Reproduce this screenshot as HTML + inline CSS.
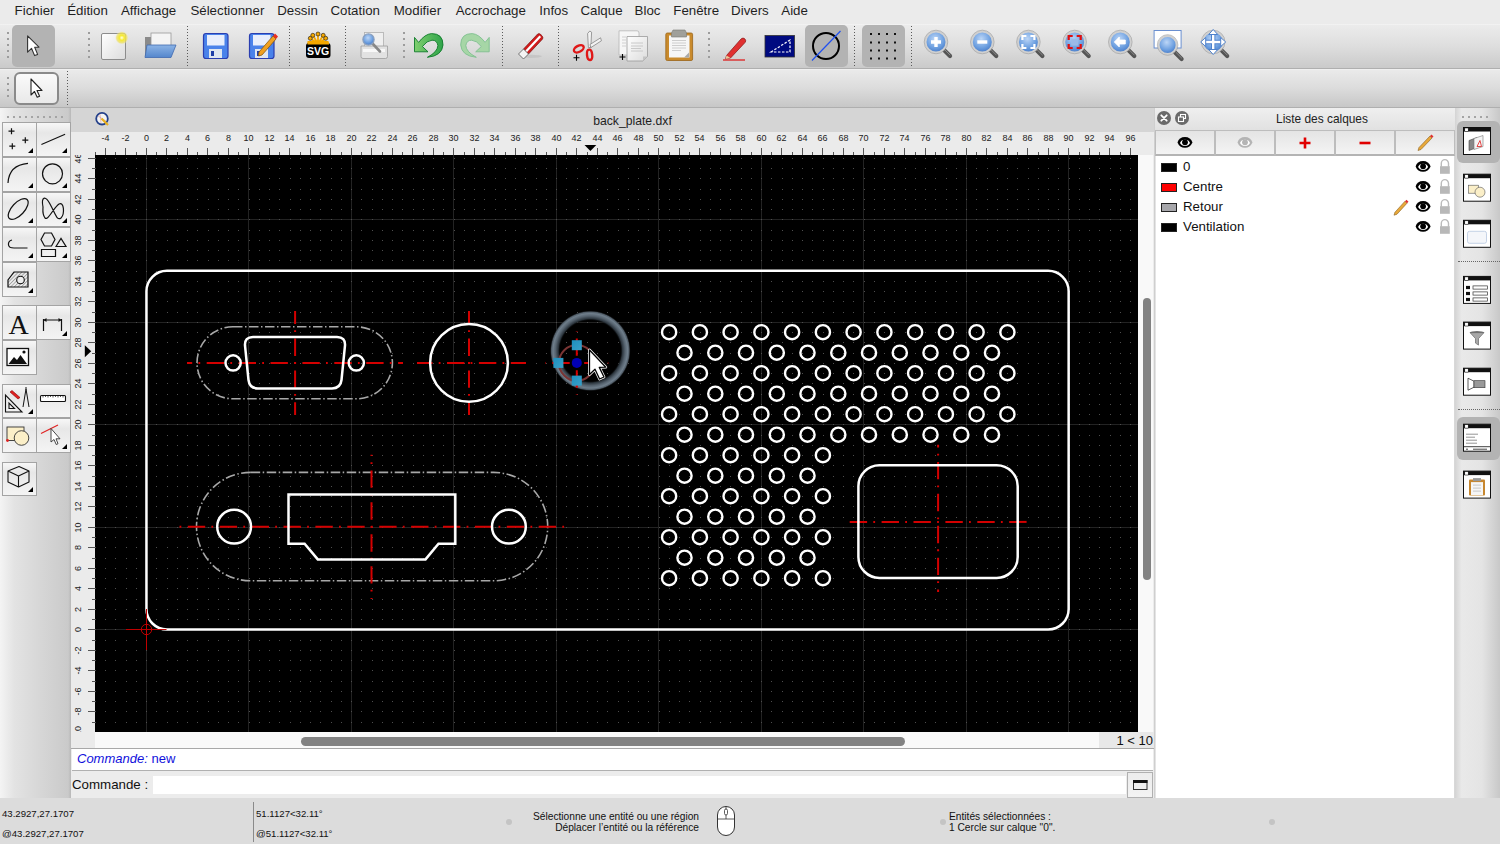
<!DOCTYPE html>
<html><head><meta charset="utf-8"><title>LibreCAD</title>
<style>
*{box-sizing:border-box}
html,body{margin:0;padding:0}
body{width:1500px;height:844px;overflow:hidden;position:relative;background:#ececec;font-family:"Liberation Sans",sans-serif;color:#1e1e1e}
.a{position:absolute}
#menubar{left:0;top:0;width:1500px;height:24px;background:#ebebeb}
#menubar span{position:absolute;top:3px;font-size:13.3px;line-height:16px;color:#1f1f1f;white-space:nowrap}
#tb1{left:0;top:24px;width:1500px;height:45px;background:linear-gradient(#f5f5f5 0,#ebebeb 1.5px,#dedede 50%,#cacaca);border-bottom:1px solid #afafaf}
#tb2{left:0;top:69px;width:1500px;height:39px;background:linear-gradient(#f3f3f3 0,#eaeaea 1.5px,#dcdcdc 50%,#c7c7c7);border-bottom:1px solid #afafaf}
.sel{position:absolute;background:#b3b3b3;border-radius:5px}
.vdots{position:absolute;width:1px;background:linear-gradient(#5a5a5a 0 1px,transparent 1px 3px) 0 0/1px 3px repeat-y}
.hdl{position:absolute;width:2px;background:linear-gradient(#9c9c9c 0 2px,transparent 2px 6px) 0 0/2px 6px repeat-y}
.ico{position:absolute}
#toolbox{left:0;top:108px;width:71px;height:690px;background:linear-gradient(90deg,#f4f4f4,#e3e3e3 20%,#d7d7d7 55%,#cacaca 96%,#b8b8b8)}
.tbtn{position:absolute;width:34px;height:34px;border:1px solid #a4a4a4;background:linear-gradient(#f7f7f7,#e7e7e7 30%,#ededed 60%,#f4f4f4)}
.tri{position:absolute;right:3px;bottom:3px;width:0;height:0;border-left:5px solid transparent;border-bottom:5px solid #000}
</style></head><body>
<div id="menubar" class="a">
<span style="left:14.6px">Fichier</span><span style="left:67.2px">Édition</span><span style="left:121px">Affichage</span><span style="left:190.4px">Sélectionner</span><span style="left:277.2px">Dessin</span><span style="left:330.4px">Cotation</span><span style="left:393.8px">Modifier</span><span style="left:455.7px">Accrochage</span><span style="left:539.3px">Infos</span><span style="left:580.4px">Calque</span><span style="left:634.6px">Bloc</span><span style="left:673.3px">Fenêtre</span><span style="left:731.1px">Divers</span><span style="left:781.3px">Aide</span>
</div>
<div id="tb1" class="a"></div>
<div class="sel" style="left:12px;top:25px;width:43px;height:42px"></div>
<div class="sel" style="left:805px;top:25px;width:43px;height:42px"></div>
<div class="sel" style="left:862px;top:25px;width:43px;height:42px"></div>
<div class="hdl" style="left:7px;top:32px;height:26px"></div>
<div class="hdl" style="left:88px;top:32px;height:26px"></div>
<div class="hdl" style="left:403px;top:32px;height:26px"></div>
<div class="hdl" style="left:708px;top:32px;height:26px"></div>
<div class="vdots" style="left:187px;top:26px;height:40px"></div>
<div class="vdots" style="left:289px;top:26px;height:40px"></div>
<div class="vdots" style="left:345px;top:26px;height:40px"></div>
<div class="vdots" style="left:502px;top:26px;height:40px"></div>
<div class="vdots" style="left:558px;top:26px;height:40px"></div>
<div class="vdots" style="left:854px;top:26px;height:40px"></div>
<div class="vdots" style="left:911px;top:26px;height:40px"></div>
<svg class="ico" style="left:0;top:24px" width="1260" height="44" viewBox="0 24 1260 44">
<defs>
<linearGradient id="blueF" x1="0" y1="0" x2="0" y2="1"><stop offset="0" stop-color="#8cb4e6"/><stop offset="1" stop-color="#5486cc"/></linearGradient>
<radialGradient id="lens" cx="0.45" cy="0.35" r="0.7"><stop offset="0" stop-color="#bcd6f7"/><stop offset="0.6" stop-color="#6ea0e0"/><stop offset="1" stop-color="#3f74c4"/></radialGradient>
<linearGradient id="grn" x1="0" y1="0" x2="0" y2="1"><stop offset="0" stop-color="#4cc46a"/><stop offset="1" stop-color="#17892f"/></linearGradient>
<linearGradient id="paper" x1="0" y1="0" x2="1" y2="1"><stop offset="0" stop-color="#ffffff"/><stop offset="1" stop-color="#dcdcdc"/></linearGradient>
</defs>
<!-- select arrow -->
<path d="M27.6,35.8 L27.6,52.2 L31.5,48.3 L34.6,55.6 L37.6,54.4 L34.7,47.3 L39,47.1 Z" fill="#fff" stroke="#333" stroke-width="1.1" stroke-linejoin="round"/>
<!-- new doc -->
<rect x="101.5" y="33.5" width="24" height="26" rx="1.5" fill="url(#paper)" stroke="#8c8c8c" stroke-width="1"/>
<radialGradient id="glow"><stop offset="0" stop-color="#ffffe8"/><stop offset="0.35" stop-color="#f6ea30"/><stop offset="0.75" stop-color="#eee060" stop-opacity="0.7"/><stop offset="1" stop-color="#eee" stop-opacity="0"/></radialGradient><circle cx="121.8" cy="37.8" r="7" fill="url(#glow)"/>
<!-- open folder -->
<path d="M145,37 L153,37 L155,35 L171,35 L171,54 L145,56 Z" fill="#8a8a8a"/>
<rect x="151" y="33" width="20" height="17" fill="#f4f4f4" stroke="#999" stroke-width="0.8"/>
<path d="M147,45 L176,45 L171,57.5 L145,57.5 Z" fill="url(#blueF)" stroke="#3f69b0" stroke-width="0.8"/>
<!-- save -->
<rect x="203.5" y="33.5" width="24.5" height="25" rx="2.5" fill="#4a82ea" stroke="#2a3eb0" stroke-width="1.2"/>
<rect x="207" y="35" width="17.5" height="10.5" fill="#e8eefc"/>
<rect x="209" y="49" width="13" height="9" fill="#dfe6f0"/><rect x="211" y="51" width="3" height="5" fill="#1f3fa8"/>
<!-- save as -->
<rect x="249.5" y="33.5" width="24.5" height="25" rx="2.5" fill="#4a82ea" stroke="#2a3eb0" stroke-width="1.2"/>
<rect x="253" y="35" width="17.5" height="10.5" fill="#e8eefc"/>
<rect x="255" y="49" width="13" height="9" fill="#dfe6f0"/><rect x="257" y="51" width="3" height="5" fill="#1f3fa8"/>
<path d="M259,52 L273,36 L276,39 L262,55 L258.5,56 Z" fill="#f0a020" stroke="#8a5a10" stroke-width="0.8"/><path d="M273,36 L275,33.5 L278,36.5 L276,39 Z" fill="#e83020"/>
<!-- SVG -->
<path d="M318,44 L310.5,38.5 M318,44 L313,35.5 M318,44 L318,34.2 M318,44 L323,35.5 M318,44 L325.5,38.5" stroke="#f5a800" stroke-width="1.8"/>
<g fill="#f5a800" stroke="#111" stroke-width="0.6"><circle cx="310.3" cy="38.3" r="2"/><circle cx="312.8" cy="35.3" r="2"/><circle cx="318" cy="34" r="2"/><circle cx="323.2" cy="35.3" r="2"/><circle cx="325.7" cy="38.3" r="2"/></g>
<rect x="307.5" y="41" width="21" height="3" fill="#f5a800"/>
<rect x="306" y="43" width="24.5" height="15" rx="3" fill="#000"/><rect x="307.5" y="42.3" width="21.5" height="2.2" fill="#f5a800"/>
<text x="318.2" y="55.3" font-size="10.5" font-weight="bold" text-anchor="middle" fill="#fff" font-family="Liberation Sans">SVG</text>
<!-- print preview -->
<rect x="364.5" y="32.5" width="19" height="14" fill="#efefef" stroke="#b0b0b0" stroke-width="0.8"/>
<path d="M361,46 L387.5,46 L387.5,56.5 Q387.5,58.5 385.5,58.5 L363,58.5 Q361,58.5 361,56.5 Z" fill="#e2e2e2" stroke="#9c9c9c" stroke-width="0.8"/>
<rect x="363" y="49" width="22" height="3" fill="#f8f8f8"/>
<line x1="372" y1="43" x2="380" y2="51.5" stroke="#888" stroke-width="2.6" stroke-linecap="round"/>
<circle cx="368.5" cy="39.5" r="5.6" fill="url(#lens)" stroke="#8aa0bf" stroke-width="1.3"/>
<!-- undo -->
<linearGradient id="grnU" x1="0" y1="0" x2="1" y2="0"><stop offset="0" stop-color="#7fcf6e"/><stop offset="1" stop-color="#2fa44a"/></linearGradient>
<path d="M414.5,37.4 L418.6,42.4 Q425,34 431.5,33.6 Q443,33.5 443,45 Q442,56 427.4,57.3 Q437.5,52 437.9,45.6 Q437,40 432,40.2 Q427,40.5 422.4,46.5 L428,51.8 L414.5,51.8 Z" fill="url(#grnU)" stroke="#0f7a2a" stroke-width="0.9" stroke-linejoin="round"/>
<!-- redo (disabled) -->
<path d="M 489.2 37.4 L 485.1 42.4 Q 478.7 34.0 472.2 33.6 Q 460.7 33.5 460.7 45.0 Q 461.7 56.0 476.3 57.3 Q 466.2 52.0 465.8 45.6 Q 466.7 40.0 471.7 40.2 Q 476.7 40.5 481.3 46.5 L 475.7 51.8 L 489.2 51.8 Z" fill="#a6d6a6" stroke="#7fbf90" stroke-width="0.9" stroke-linejoin="round"/>
<!-- eraser -->
<ellipse cx="531" cy="56.3" rx="11" ry="1.6" fill="#bbb" opacity="0.6"/>
<path d="M523.5,49 L537.5,34.2 Q539,33 540.5,34.3 L542.5,36.5 Q543.5,38 542.3,39.3 L528.5,54 Z" fill="#d21a1a" stroke="#7a1010" stroke-width="0.7"/>
<path d="M526,51.5 L540.3,36.3" stroke="#fff" stroke-width="2.2"/>
<path d="M518.5,54 L523.5,49 L528.5,54 L523.5,59 Z" fill="#f4f4f4" stroke="#555" stroke-width="0.8"/>
<!-- scissors -->
<path d="M587.6,33.5 L589.8,31 L591.6,32.2 L590.8,47.5 L588.4,47.5 Z" fill="#f2f2f2" stroke="#777" stroke-width="0.7"/>
<path d="M590,44.5 L600.6,37.8 L601.4,40.8 L590.8,47.6 Z" fill="#f2f2f2" stroke="#777" stroke-width="0.7"/>
<ellipse cx="578.8" cy="48.8" rx="5.3" ry="3" fill="none" stroke="#e01818" stroke-width="2.4" transform="rotate(-28 578.8 48.8)"/>
<ellipse cx="589.6" cy="54.8" rx="2.6" ry="5.2" fill="none" stroke="#e01818" stroke-width="2.4" transform="rotate(-6 589.6 54.8)"/>
<path d="M573.5,57.8 h6 M576.5,54.8 v6" stroke="#000" stroke-width="1.1"/>
<!-- copy -->
<path d="M619,30.8 L637,30.8 Q639,30.8 639,33 L639,55 L619,55 Z" fill="#f6f6f6" stroke="#b5b5b5" stroke-width="0.8"/>
<path d="M622,37 h4 M622,40 h4 M622,43 h4 M622,46 h4" stroke="#ccc" stroke-width="0.9"/>
<path d="M627,36.5 L647.5,36.5 L647.5,56.5 L643,61 L627,61 Z" fill="url(#paper)" stroke="#9a9a9a" stroke-width="0.8"/>
<path d="M643,61 L643,56.5 L647.5,56.5 Z" fill="#c4c4c4"/>
<path d="M631,43 h12 M631,46 h12 M631,48.5 h10 M631,51 h12" stroke="#c4c4c4" stroke-width="0.9"/>
<path d="M619.5,57 h6 M622.5,54 v6" stroke="#000" stroke-width="1.1"/>
<!-- paste -->
<rect x="665.8" y="33" width="26.8" height="27.5" rx="1.5" fill="#c98a2c" stroke="#9a6418" stroke-width="0.8"/>
<rect x="669" y="35.5" width="20.5" height="22" fill="#f6f6f6"/>
<path d="M672,40.5 h14 M672,43 h14 M672,45.5 h14 M672,48 h14 M672,50.5 h9" stroke="#c8c8c8" stroke-width="0.9"/>
<path d="M673,30 h12 l1.5,3 v4 h-15 v-4 z" fill="#a0a09a" stroke="#7a7a74" stroke-width="0.6"/>
<path d="M684,57.5 L689,52.5 L689,57.5 Z" fill="#aaa"/>
<!-- pencil -->
<path d="M726.5,55.5 L741,39 Q743,37 745,39 Q746.5,41 745,42.5 L730.5,58 L725.5,59 Z" fill="#e03030" stroke="#902020" stroke-width="0.8"/>
<path d="M726.5,55.5 L730.5,58 L725.5,59 Z" fill="#e9c89a"/>
<line x1="723" y1="60" x2="745" y2="60" stroke="#e01010" stroke-width="1.2"/>
<!-- ortho blue -->
<rect x="765" y="35.5" width="29.5" height="21.5" fill="#000a80" stroke="#333" stroke-width="0.8"/>
<path d="M771,52 L790,40 L790,52 Z" fill="none" stroke="#fff" stroke-width="1.2" stroke-dasharray="2.5 1.5"/>
<!-- circle slash -->
<circle cx="826" cy="46" r="13" fill="none" stroke="#000" stroke-width="2"/>
<line x1="812" y1="60.5" x2="840.5" y2="31" stroke="#2050f0" stroke-width="1.2"/>
<!-- grid dots -->
<g fill="#111">
<rect x="870" y="33" width="2" height="2"/><rect x="878" y="33" width="2" height="2"/><rect x="886" y="33" width="2" height="2"/><rect x="894" y="33" width="2" height="2"/>
<rect x="870" y="41.5" width="2" height="2"/><rect x="878" y="41.5" width="2" height="2"/><rect x="886" y="41.5" width="2" height="2"/><rect x="894" y="41.5" width="2" height="2"/>
<rect x="870" y="49.5" width="2" height="2"/><rect x="878" y="49.5" width="2" height="2"/><rect x="886" y="49.5" width="2" height="2"/><rect x="894" y="49.5" width="2" height="2"/>
<rect x="870" y="57.5" width="2" height="2"/><rect x="878" y="57.5" width="2" height="2"/><rect x="886" y="57.5" width="2" height="2"/><rect x="894" y="57.5" width="2" height="2"/>
</g>
<line x1="943.5" y1="49.5" x2="950.0" y2="56.0" stroke="#555" stroke-width="4.2" stroke-linecap="round"/>
<line x1="944.5" y1="49.5" x2="950.0" y2="55.0" stroke="#8a8a8a" stroke-width="1" stroke-linecap="round"/>
<circle cx="936.0" cy="42.0" r="10.5" fill="url(#lens)" stroke="#d0d0d0" stroke-width="2"/>
<circle cx="936.0" cy="42.0" r="11.8" fill="none" stroke="#999" stroke-width="0.6"/>
<path d="M931.0,42.0 h10 M936.0,37.0 v10" stroke="#fff" stroke-width="3.4"/>
<line x1="989.8" y1="49.5" x2="996.3" y2="56.0" stroke="#555" stroke-width="4.2" stroke-linecap="round"/>
<line x1="990.8" y1="49.5" x2="996.3" y2="55.0" stroke="#8a8a8a" stroke-width="1" stroke-linecap="round"/>
<circle cx="982.3" cy="42.0" r="10.5" fill="url(#lens)" stroke="#d0d0d0" stroke-width="2"/>
<circle cx="982.3" cy="42.0" r="11.8" fill="none" stroke="#999" stroke-width="0.6"/>
<path d="M977.3,42.0 h10" stroke="#fff" stroke-width="3.4"/>
<line x1="1035.9" y1="49.5" x2="1042.4" y2="56.0" stroke="#555" stroke-width="4.2" stroke-linecap="round"/>
<line x1="1036.9" y1="49.5" x2="1042.4" y2="55.0" stroke="#8a8a8a" stroke-width="1" stroke-linecap="round"/>
<circle cx="1028.4" cy="42.0" r="10.5" fill="url(#lens)" stroke="#d0d0d0" stroke-width="2"/>
<circle cx="1028.4" cy="42.0" r="11.8" fill="none" stroke="#999" stroke-width="0.6"/>
<path d="M1022.4,40.0 v-4 h4 M1030.4,36.0 h4 v4 M1034.4,44.0 v4 h-4 M1026.4,48.0 h-4 v-4" fill="none" stroke="#fff" stroke-width="2.2"/>
<line x1="1082.2" y1="49.5" x2="1088.7" y2="56.0" stroke="#555" stroke-width="4.2" stroke-linecap="round"/>
<line x1="1083.2" y1="49.5" x2="1088.7" y2="55.0" stroke="#8a8a8a" stroke-width="1" stroke-linecap="round"/>
<circle cx="1074.7" cy="42.0" r="10.5" fill="url(#lens)" stroke="#d0d0d0" stroke-width="2"/>
<circle cx="1074.7" cy="42.0" r="11.8" fill="none" stroke="#999" stroke-width="0.6"/>
<path d="M1068.7,40.0 v-4 h4 M1076.7,36.0 h4 v4 M1080.7,44.0 v4 h-4 M1072.7,48.0 h-4 v-4" fill="none" stroke="#e01010" stroke-width="2.2"/>
<rect x="1071.2" y="38.5" width="7" height="7" fill="#9bbbe8"/>
<line x1="1127.8" y1="49.5" x2="1134.3" y2="56.0" stroke="#555" stroke-width="4.2" stroke-linecap="round"/>
<line x1="1128.8" y1="49.5" x2="1134.3" y2="55.0" stroke="#8a8a8a" stroke-width="1" stroke-linecap="round"/>
<circle cx="1120.3" cy="42.0" r="10.5" fill="url(#lens)" stroke="#d0d0d0" stroke-width="2"/>
<circle cx="1120.3" cy="42.0" r="11.8" fill="none" stroke="#999" stroke-width="0.6"/>
<path d="M1114.3,42.0 l5,-5 v3 h6 v4 h-6 v3 z" fill="#fff" stroke="#fff" stroke-width="0.8" stroke-linejoin="round"/>
<rect x="1154.1" y="30.5" width="27" height="17.5" fill="#fff" stroke="#6a8fd0" stroke-width="1"/>
<line x1="1175.1" y1="52.5" x2="1181.6" y2="59.0" stroke="#555" stroke-width="4.2" stroke-linecap="round"/>
<line x1="1176.1" y1="52.5" x2="1181.6" y2="58.0" stroke="#8a8a8a" stroke-width="1" stroke-linecap="round"/>
<circle cx="1167.6" cy="45.0" r="9.0" fill="url(#lens)" stroke="#d0d0d0" stroke-width="2"/>
<circle cx="1167.6" cy="45.0" r="10.3" fill="none" stroke="#999" stroke-width="0.6"/>
<line x1="1220.7" y1="49.5" x2="1227.2" y2="56.0" stroke="#555" stroke-width="4.2" stroke-linecap="round"/>
<line x1="1221.7" y1="49.5" x2="1227.2" y2="55.0" stroke="#8a8a8a" stroke-width="1" stroke-linecap="round"/>
<circle cx="1213.2" cy="42.0" r="10.5" fill="url(#lens)" stroke="#d0d0d0" stroke-width="2"/>
<circle cx="1213.2" cy="42.0" r="11.8" fill="none" stroke="#999" stroke-width="0.6"/>
<path d="M1204.7,42.0 h17 M1213.2,33.5 v17" stroke="#4f82cc" stroke-width="4.4"/>
<path d="M1204.7,42.0 h17 M1213.2,33.5 v17" stroke="#fff" stroke-width="2.4"/>
<path d="M1200.7,42.0 l5,-4.5 v9 z M1225.7,42.0 l-5,-4.5 v9 z M1213.2,29.5 l-4.5,5 h9 z M1213.2,54.5 l-4.5,-5 h9 z" fill="#fff" stroke="#4f82cc" stroke-width="1" stroke-linejoin="round"/>
</svg>
<div id="tb2" class="a"></div>
<div class="hdl" style="left:7px;top:77px;height:20px"></div>
<div class="vdots" style="left:67px;top:71px;height:35px"></div>
<div class="a" style="left:14px;top:72px;width:45px;height:33px;border:2px solid #8a8a8a;border-radius:6px;background:linear-gradient(#fafafa,#e9e9e9)"></div>
<svg class="ico" style="left:14px;top:72px" width="45" height="33" viewBox="14 72 45 33">
<path d="M31,79 L31,95 L34.5,91.5 L37.2,97.3 L39.6,96.2 L37,90.5 L42,90.5 Z" fill="#fff" stroke="#222" stroke-width="1.1" stroke-linejoin="round"/>
</svg>
<svg style="position:absolute;left:71px;top:132px" width="1082" height="23" viewBox="71 132 1082 23">
<rect x="71" y="132" width="1082" height="23" fill="#ebebeb"/>
<line x1="95.5" y1="152" x2="95.5" y2="155" stroke="#555" stroke-width="1"/>
<line x1="105.5" y1="148" x2="105.5" y2="155" stroke="#555" stroke-width="1"/>
<text x="105.5" y="141.2" font-size="9" text-anchor="middle" fill="#222">-4</text>
<line x1="115.5" y1="152" x2="115.5" y2="155" stroke="#555" stroke-width="1"/>
<line x1="125.5" y1="148" x2="125.5" y2="155" stroke="#555" stroke-width="1"/>
<text x="125.5" y="141.2" font-size="9" text-anchor="middle" fill="#222">-2</text>
<line x1="136.5" y1="152" x2="136.5" y2="155" stroke="#555" stroke-width="1"/>
<line x1="146.5" y1="148" x2="146.5" y2="155" stroke="#555" stroke-width="1"/>
<text x="146.5" y="141.2" font-size="9" text-anchor="middle" fill="#222">0</text>
<line x1="156.5" y1="152" x2="156.5" y2="155" stroke="#555" stroke-width="1"/>
<line x1="166.5" y1="148" x2="166.5" y2="155" stroke="#555" stroke-width="1"/>
<text x="166.5" y="141.2" font-size="9" text-anchor="middle" fill="#222">2</text>
<line x1="177.5" y1="152" x2="177.5" y2="155" stroke="#555" stroke-width="1"/>
<line x1="187.5" y1="148" x2="187.5" y2="155" stroke="#555" stroke-width="1"/>
<text x="187.5" y="141.2" font-size="9" text-anchor="middle" fill="#222">4</text>
<line x1="197.5" y1="152" x2="197.5" y2="155" stroke="#555" stroke-width="1"/>
<line x1="207.5" y1="148" x2="207.5" y2="155" stroke="#555" stroke-width="1"/>
<text x="207.5" y="141.2" font-size="9" text-anchor="middle" fill="#222">6</text>
<line x1="218.5" y1="152" x2="218.5" y2="155" stroke="#555" stroke-width="1"/>
<line x1="228.5" y1="148" x2="228.5" y2="155" stroke="#555" stroke-width="1"/>
<text x="228.5" y="141.2" font-size="9" text-anchor="middle" fill="#222">8</text>
<line x1="238.5" y1="152" x2="238.5" y2="155" stroke="#555" stroke-width="1"/>
<line x1="248.5" y1="148" x2="248.5" y2="155" stroke="#555" stroke-width="1"/>
<text x="248.5" y="141.2" font-size="9" text-anchor="middle" fill="#222">10</text>
<line x1="259.5" y1="152" x2="259.5" y2="155" stroke="#555" stroke-width="1"/>
<line x1="269.5" y1="148" x2="269.5" y2="155" stroke="#555" stroke-width="1"/>
<text x="269.5" y="141.2" font-size="9" text-anchor="middle" fill="#222">12</text>
<line x1="279.5" y1="152" x2="279.5" y2="155" stroke="#555" stroke-width="1"/>
<line x1="289.5" y1="148" x2="289.5" y2="155" stroke="#555" stroke-width="1"/>
<text x="289.5" y="141.2" font-size="9" text-anchor="middle" fill="#222">14</text>
<line x1="300.5" y1="152" x2="300.5" y2="155" stroke="#555" stroke-width="1"/>
<line x1="310.5" y1="148" x2="310.5" y2="155" stroke="#555" stroke-width="1"/>
<text x="310.5" y="141.2" font-size="9" text-anchor="middle" fill="#222">16</text>
<line x1="320.5" y1="152" x2="320.5" y2="155" stroke="#555" stroke-width="1"/>
<line x1="330.5" y1="148" x2="330.5" y2="155" stroke="#555" stroke-width="1"/>
<text x="330.5" y="141.2" font-size="9" text-anchor="middle" fill="#222">18</text>
<line x1="341.5" y1="152" x2="341.5" y2="155" stroke="#555" stroke-width="1"/>
<line x1="351.5" y1="148" x2="351.5" y2="155" stroke="#555" stroke-width="1"/>
<text x="351.5" y="141.2" font-size="9" text-anchor="middle" fill="#222">20</text>
<line x1="361.5" y1="152" x2="361.5" y2="155" stroke="#555" stroke-width="1"/>
<line x1="371.5" y1="148" x2="371.5" y2="155" stroke="#555" stroke-width="1"/>
<text x="371.5" y="141.2" font-size="9" text-anchor="middle" fill="#222">22</text>
<line x1="382.5" y1="152" x2="382.5" y2="155" stroke="#555" stroke-width="1"/>
<line x1="392.5" y1="148" x2="392.5" y2="155" stroke="#555" stroke-width="1"/>
<text x="392.5" y="141.2" font-size="9" text-anchor="middle" fill="#222">24</text>
<line x1="402.5" y1="152" x2="402.5" y2="155" stroke="#555" stroke-width="1"/>
<line x1="412.5" y1="148" x2="412.5" y2="155" stroke="#555" stroke-width="1"/>
<text x="412.5" y="141.2" font-size="9" text-anchor="middle" fill="#222">26</text>
<line x1="423.5" y1="152" x2="423.5" y2="155" stroke="#555" stroke-width="1"/>
<line x1="433.5" y1="148" x2="433.5" y2="155" stroke="#555" stroke-width="1"/>
<text x="433.5" y="141.2" font-size="9" text-anchor="middle" fill="#222">28</text>
<line x1="443.5" y1="152" x2="443.5" y2="155" stroke="#555" stroke-width="1"/>
<line x1="453.5" y1="148" x2="453.5" y2="155" stroke="#555" stroke-width="1"/>
<text x="453.5" y="141.2" font-size="9" text-anchor="middle" fill="#222">30</text>
<line x1="464.5" y1="152" x2="464.5" y2="155" stroke="#555" stroke-width="1"/>
<line x1="474.5" y1="148" x2="474.5" y2="155" stroke="#555" stroke-width="1"/>
<text x="474.5" y="141.2" font-size="9" text-anchor="middle" fill="#222">32</text>
<line x1="484.5" y1="152" x2="484.5" y2="155" stroke="#555" stroke-width="1"/>
<line x1="494.5" y1="148" x2="494.5" y2="155" stroke="#555" stroke-width="1"/>
<text x="494.5" y="141.2" font-size="9" text-anchor="middle" fill="#222">34</text>
<line x1="505.5" y1="152" x2="505.5" y2="155" stroke="#555" stroke-width="1"/>
<line x1="515.5" y1="148" x2="515.5" y2="155" stroke="#555" stroke-width="1"/>
<text x="515.5" y="141.2" font-size="9" text-anchor="middle" fill="#222">36</text>
<line x1="525.5" y1="152" x2="525.5" y2="155" stroke="#555" stroke-width="1"/>
<line x1="535.5" y1="148" x2="535.5" y2="155" stroke="#555" stroke-width="1"/>
<text x="535.5" y="141.2" font-size="9" text-anchor="middle" fill="#222">38</text>
<line x1="546.5" y1="152" x2="546.5" y2="155" stroke="#555" stroke-width="1"/>
<line x1="556.5" y1="148" x2="556.5" y2="155" stroke="#555" stroke-width="1"/>
<text x="556.5" y="141.2" font-size="9" text-anchor="middle" fill="#222">40</text>
<line x1="566.5" y1="152" x2="566.5" y2="155" stroke="#555" stroke-width="1"/>
<line x1="576.5" y1="148" x2="576.5" y2="155" stroke="#555" stroke-width="1"/>
<text x="576.5" y="141.2" font-size="9" text-anchor="middle" fill="#222">42</text>
<line x1="587.5" y1="152" x2="587.5" y2="155" stroke="#555" stroke-width="1"/>
<line x1="597.5" y1="148" x2="597.5" y2="155" stroke="#555" stroke-width="1"/>
<text x="597.5" y="141.2" font-size="9" text-anchor="middle" fill="#222">44</text>
<line x1="607.5" y1="152" x2="607.5" y2="155" stroke="#555" stroke-width="1"/>
<line x1="617.5" y1="148" x2="617.5" y2="155" stroke="#555" stroke-width="1"/>
<text x="617.5" y="141.2" font-size="9" text-anchor="middle" fill="#222">46</text>
<line x1="628.5" y1="152" x2="628.5" y2="155" stroke="#555" stroke-width="1"/>
<line x1="638.5" y1="148" x2="638.5" y2="155" stroke="#555" stroke-width="1"/>
<text x="638.5" y="141.2" font-size="9" text-anchor="middle" fill="#222">48</text>
<line x1="648.5" y1="152" x2="648.5" y2="155" stroke="#555" stroke-width="1"/>
<line x1="658.5" y1="148" x2="658.5" y2="155" stroke="#555" stroke-width="1"/>
<text x="658.5" y="141.2" font-size="9" text-anchor="middle" fill="#222">50</text>
<line x1="669.5" y1="152" x2="669.5" y2="155" stroke="#555" stroke-width="1"/>
<line x1="679.5" y1="148" x2="679.5" y2="155" stroke="#555" stroke-width="1"/>
<text x="679.5" y="141.2" font-size="9" text-anchor="middle" fill="#222">52</text>
<line x1="689.5" y1="152" x2="689.5" y2="155" stroke="#555" stroke-width="1"/>
<line x1="699.5" y1="148" x2="699.5" y2="155" stroke="#555" stroke-width="1"/>
<text x="699.5" y="141.2" font-size="9" text-anchor="middle" fill="#222">54</text>
<line x1="710.5" y1="152" x2="710.5" y2="155" stroke="#555" stroke-width="1"/>
<line x1="720.5" y1="148" x2="720.5" y2="155" stroke="#555" stroke-width="1"/>
<text x="720.5" y="141.2" font-size="9" text-anchor="middle" fill="#222">56</text>
<line x1="730.5" y1="152" x2="730.5" y2="155" stroke="#555" stroke-width="1"/>
<line x1="740.5" y1="148" x2="740.5" y2="155" stroke="#555" stroke-width="1"/>
<text x="740.5" y="141.2" font-size="9" text-anchor="middle" fill="#222">58</text>
<line x1="751.5" y1="152" x2="751.5" y2="155" stroke="#555" stroke-width="1"/>
<line x1="761.5" y1="148" x2="761.5" y2="155" stroke="#555" stroke-width="1"/>
<text x="761.5" y="141.2" font-size="9" text-anchor="middle" fill="#222">60</text>
<line x1="771.5" y1="152" x2="771.5" y2="155" stroke="#555" stroke-width="1"/>
<line x1="781.5" y1="148" x2="781.5" y2="155" stroke="#555" stroke-width="1"/>
<text x="781.5" y="141.2" font-size="9" text-anchor="middle" fill="#222">62</text>
<line x1="792.5" y1="152" x2="792.5" y2="155" stroke="#555" stroke-width="1"/>
<line x1="802.5" y1="148" x2="802.5" y2="155" stroke="#555" stroke-width="1"/>
<text x="802.5" y="141.2" font-size="9" text-anchor="middle" fill="#222">64</text>
<line x1="812.5" y1="152" x2="812.5" y2="155" stroke="#555" stroke-width="1"/>
<line x1="822.5" y1="148" x2="822.5" y2="155" stroke="#555" stroke-width="1"/>
<text x="822.5" y="141.2" font-size="9" text-anchor="middle" fill="#222">66</text>
<line x1="833.5" y1="152" x2="833.5" y2="155" stroke="#555" stroke-width="1"/>
<line x1="843.5" y1="148" x2="843.5" y2="155" stroke="#555" stroke-width="1"/>
<text x="843.5" y="141.2" font-size="9" text-anchor="middle" fill="#222">68</text>
<line x1="853.5" y1="152" x2="853.5" y2="155" stroke="#555" stroke-width="1"/>
<line x1="863.5" y1="148" x2="863.5" y2="155" stroke="#555" stroke-width="1"/>
<text x="863.5" y="141.2" font-size="9" text-anchor="middle" fill="#222">70</text>
<line x1="874.5" y1="152" x2="874.5" y2="155" stroke="#555" stroke-width="1"/>
<line x1="884.5" y1="148" x2="884.5" y2="155" stroke="#555" stroke-width="1"/>
<text x="884.5" y="141.2" font-size="9" text-anchor="middle" fill="#222">72</text>
<line x1="894.5" y1="152" x2="894.5" y2="155" stroke="#555" stroke-width="1"/>
<line x1="904.5" y1="148" x2="904.5" y2="155" stroke="#555" stroke-width="1"/>
<text x="904.5" y="141.2" font-size="9" text-anchor="middle" fill="#222">74</text>
<line x1="915.5" y1="152" x2="915.5" y2="155" stroke="#555" stroke-width="1"/>
<line x1="925.5" y1="148" x2="925.5" y2="155" stroke="#555" stroke-width="1"/>
<text x="925.5" y="141.2" font-size="9" text-anchor="middle" fill="#222">76</text>
<line x1="935.5" y1="152" x2="935.5" y2="155" stroke="#555" stroke-width="1"/>
<line x1="945.5" y1="148" x2="945.5" y2="155" stroke="#555" stroke-width="1"/>
<text x="945.5" y="141.2" font-size="9" text-anchor="middle" fill="#222">78</text>
<line x1="956.5" y1="152" x2="956.5" y2="155" stroke="#555" stroke-width="1"/>
<line x1="966.5" y1="148" x2="966.5" y2="155" stroke="#555" stroke-width="1"/>
<text x="966.5" y="141.2" font-size="9" text-anchor="middle" fill="#222">80</text>
<line x1="976.5" y1="152" x2="976.5" y2="155" stroke="#555" stroke-width="1"/>
<line x1="986.5" y1="148" x2="986.5" y2="155" stroke="#555" stroke-width="1"/>
<text x="986.5" y="141.2" font-size="9" text-anchor="middle" fill="#222">82</text>
<line x1="997.5" y1="152" x2="997.5" y2="155" stroke="#555" stroke-width="1"/>
<line x1="1007.5" y1="148" x2="1007.5" y2="155" stroke="#555" stroke-width="1"/>
<text x="1007.5" y="141.2" font-size="9" text-anchor="middle" fill="#222">84</text>
<line x1="1017.5" y1="152" x2="1017.5" y2="155" stroke="#555" stroke-width="1"/>
<line x1="1027.5" y1="148" x2="1027.5" y2="155" stroke="#555" stroke-width="1"/>
<text x="1027.5" y="141.2" font-size="9" text-anchor="middle" fill="#222">86</text>
<line x1="1038.5" y1="152" x2="1038.5" y2="155" stroke="#555" stroke-width="1"/>
<line x1="1048.5" y1="148" x2="1048.5" y2="155" stroke="#555" stroke-width="1"/>
<text x="1048.5" y="141.2" font-size="9" text-anchor="middle" fill="#222">88</text>
<line x1="1058.5" y1="152" x2="1058.5" y2="155" stroke="#555" stroke-width="1"/>
<line x1="1068.5" y1="148" x2="1068.5" y2="155" stroke="#555" stroke-width="1"/>
<text x="1068.5" y="141.2" font-size="9" text-anchor="middle" fill="#222">90</text>
<line x1="1079.5" y1="152" x2="1079.5" y2="155" stroke="#555" stroke-width="1"/>
<line x1="1089.5" y1="148" x2="1089.5" y2="155" stroke="#555" stroke-width="1"/>
<text x="1089.5" y="141.2" font-size="9" text-anchor="middle" fill="#222">92</text>
<line x1="1099.5" y1="152" x2="1099.5" y2="155" stroke="#555" stroke-width="1"/>
<line x1="1109.5" y1="148" x2="1109.5" y2="155" stroke="#555" stroke-width="1"/>
<text x="1109.5" y="141.2" font-size="9" text-anchor="middle" fill="#222">94</text>
<line x1="1120.5" y1="152" x2="1120.5" y2="155" stroke="#555" stroke-width="1"/>
<line x1="1130.5" y1="148" x2="1130.5" y2="155" stroke="#555" stroke-width="1"/>
<text x="1130.5" y="141.2" font-size="9" text-anchor="middle" fill="#222">96</text>
<path d="M584.5,145 L596.3,145 L590.4,151 Z" fill="#000"/>
</svg><svg style="position:absolute;left:71px;top:155px" width="24" height="577" viewBox="71 155 24 577">
<rect x="71" y="155" width="24" height="577" fill="#ebebeb"/>
<line x1="92" y1="742.5" x2="95" y2="742.5" stroke="#555" stroke-width="1"/>
<line x1="88" y1="732.5" x2="95" y2="732.5" stroke="#555" stroke-width="1"/>
<text transform="translate(80.8,732.5) rotate(-90)" font-size="9" text-anchor="middle" fill="#222">-10</text>
<line x1="92" y1="722.5" x2="95" y2="722.5" stroke="#555" stroke-width="1"/>
<line x1="88" y1="711.5" x2="95" y2="711.5" stroke="#555" stroke-width="1"/>
<text transform="translate(80.8,711.5) rotate(-90)" font-size="9" text-anchor="middle" fill="#222">-8</text>
<line x1="92" y1="701.5" x2="95" y2="701.5" stroke="#555" stroke-width="1"/>
<line x1="88" y1="691.5" x2="95" y2="691.5" stroke="#555" stroke-width="1"/>
<text transform="translate(80.8,691.5) rotate(-90)" font-size="9" text-anchor="middle" fill="#222">-6</text>
<line x1="92" y1="681.5" x2="95" y2="681.5" stroke="#555" stroke-width="1"/>
<line x1="88" y1="670.5" x2="95" y2="670.5" stroke="#555" stroke-width="1"/>
<text transform="translate(80.8,670.5) rotate(-90)" font-size="9" text-anchor="middle" fill="#222">-4</text>
<line x1="92" y1="660.5" x2="95" y2="660.5" stroke="#555" stroke-width="1"/>
<line x1="88" y1="650.5" x2="95" y2="650.5" stroke="#555" stroke-width="1"/>
<text transform="translate(80.8,650.5) rotate(-90)" font-size="9" text-anchor="middle" fill="#222">-2</text>
<line x1="92" y1="640.5" x2="95" y2="640.5" stroke="#555" stroke-width="1"/>
<line x1="88" y1="629.5" x2="95" y2="629.5" stroke="#555" stroke-width="1"/>
<text transform="translate(80.8,629.5) rotate(-90)" font-size="9" text-anchor="middle" fill="#222">0</text>
<line x1="92" y1="619.5" x2="95" y2="619.5" stroke="#555" stroke-width="1"/>
<line x1="88" y1="609.5" x2="95" y2="609.5" stroke="#555" stroke-width="1"/>
<text transform="translate(80.8,609.5) rotate(-90)" font-size="9" text-anchor="middle" fill="#222">2</text>
<line x1="92" y1="599.5" x2="95" y2="599.5" stroke="#555" stroke-width="1"/>
<line x1="88" y1="588.5" x2="95" y2="588.5" stroke="#555" stroke-width="1"/>
<text transform="translate(80.8,588.5) rotate(-90)" font-size="9" text-anchor="middle" fill="#222">4</text>
<line x1="92" y1="578.5" x2="95" y2="578.5" stroke="#555" stroke-width="1"/>
<line x1="88" y1="568.5" x2="95" y2="568.5" stroke="#555" stroke-width="1"/>
<text transform="translate(80.8,568.5) rotate(-90)" font-size="9" text-anchor="middle" fill="#222">6</text>
<line x1="92" y1="558.5" x2="95" y2="558.5" stroke="#555" stroke-width="1"/>
<line x1="88" y1="547.5" x2="95" y2="547.5" stroke="#555" stroke-width="1"/>
<text transform="translate(80.8,547.5) rotate(-90)" font-size="9" text-anchor="middle" fill="#222">8</text>
<line x1="92" y1="537.5" x2="95" y2="537.5" stroke="#555" stroke-width="1"/>
<line x1="88" y1="527.5" x2="95" y2="527.5" stroke="#555" stroke-width="1"/>
<text transform="translate(80.8,527.5) rotate(-90)" font-size="9" text-anchor="middle" fill="#222">10</text>
<line x1="92" y1="517.5" x2="95" y2="517.5" stroke="#555" stroke-width="1"/>
<line x1="88" y1="506.5" x2="95" y2="506.5" stroke="#555" stroke-width="1"/>
<text transform="translate(80.8,506.5) rotate(-90)" font-size="9" text-anchor="middle" fill="#222">12</text>
<line x1="92" y1="496.5" x2="95" y2="496.5" stroke="#555" stroke-width="1"/>
<line x1="88" y1="486.5" x2="95" y2="486.5" stroke="#555" stroke-width="1"/>
<text transform="translate(80.8,486.5) rotate(-90)" font-size="9" text-anchor="middle" fill="#222">14</text>
<line x1="92" y1="476.5" x2="95" y2="476.5" stroke="#555" stroke-width="1"/>
<line x1="88" y1="465.5" x2="95" y2="465.5" stroke="#555" stroke-width="1"/>
<text transform="translate(80.8,465.5) rotate(-90)" font-size="9" text-anchor="middle" fill="#222">16</text>
<line x1="92" y1="455.5" x2="95" y2="455.5" stroke="#555" stroke-width="1"/>
<line x1="88" y1="445.5" x2="95" y2="445.5" stroke="#555" stroke-width="1"/>
<text transform="translate(80.8,445.5) rotate(-90)" font-size="9" text-anchor="middle" fill="#222">18</text>
<line x1="92" y1="435.5" x2="95" y2="435.5" stroke="#555" stroke-width="1"/>
<line x1="88" y1="424.5" x2="95" y2="424.5" stroke="#555" stroke-width="1"/>
<text transform="translate(80.8,424.5) rotate(-90)" font-size="9" text-anchor="middle" fill="#222">20</text>
<line x1="92" y1="414.5" x2="95" y2="414.5" stroke="#555" stroke-width="1"/>
<line x1="88" y1="404.5" x2="95" y2="404.5" stroke="#555" stroke-width="1"/>
<text transform="translate(80.8,404.5) rotate(-90)" font-size="9" text-anchor="middle" fill="#222">22</text>
<line x1="92" y1="394.5" x2="95" y2="394.5" stroke="#555" stroke-width="1"/>
<line x1="88" y1="383.5" x2="95" y2="383.5" stroke="#555" stroke-width="1"/>
<text transform="translate(80.8,383.5) rotate(-90)" font-size="9" text-anchor="middle" fill="#222">24</text>
<line x1="92" y1="373.5" x2="95" y2="373.5" stroke="#555" stroke-width="1"/>
<line x1="88" y1="363.5" x2="95" y2="363.5" stroke="#555" stroke-width="1"/>
<text transform="translate(80.8,363.5) rotate(-90)" font-size="9" text-anchor="middle" fill="#222">26</text>
<line x1="92" y1="353.5" x2="95" y2="353.5" stroke="#555" stroke-width="1"/>
<line x1="88" y1="342.5" x2="95" y2="342.5" stroke="#555" stroke-width="1"/>
<text transform="translate(80.8,342.5) rotate(-90)" font-size="9" text-anchor="middle" fill="#222">28</text>
<line x1="92" y1="332.5" x2="95" y2="332.5" stroke="#555" stroke-width="1"/>
<line x1="88" y1="322.5" x2="95" y2="322.5" stroke="#555" stroke-width="1"/>
<text transform="translate(80.8,322.5) rotate(-90)" font-size="9" text-anchor="middle" fill="#222">30</text>
<line x1="92" y1="312.5" x2="95" y2="312.5" stroke="#555" stroke-width="1"/>
<line x1="88" y1="301.5" x2="95" y2="301.5" stroke="#555" stroke-width="1"/>
<text transform="translate(80.8,301.5) rotate(-90)" font-size="9" text-anchor="middle" fill="#222">32</text>
<line x1="92" y1="291.5" x2="95" y2="291.5" stroke="#555" stroke-width="1"/>
<line x1="88" y1="281.5" x2="95" y2="281.5" stroke="#555" stroke-width="1"/>
<text transform="translate(80.8,281.5) rotate(-90)" font-size="9" text-anchor="middle" fill="#222">34</text>
<line x1="92" y1="271.5" x2="95" y2="271.5" stroke="#555" stroke-width="1"/>
<line x1="88" y1="260.5" x2="95" y2="260.5" stroke="#555" stroke-width="1"/>
<text transform="translate(80.8,260.5) rotate(-90)" font-size="9" text-anchor="middle" fill="#222">36</text>
<line x1="92" y1="250.5" x2="95" y2="250.5" stroke="#555" stroke-width="1"/>
<line x1="88" y1="240.5" x2="95" y2="240.5" stroke="#555" stroke-width="1"/>
<text transform="translate(80.8,240.5) rotate(-90)" font-size="9" text-anchor="middle" fill="#222">38</text>
<line x1="92" y1="230.5" x2="95" y2="230.5" stroke="#555" stroke-width="1"/>
<line x1="88" y1="219.5" x2="95" y2="219.5" stroke="#555" stroke-width="1"/>
<text transform="translate(80.8,219.5) rotate(-90)" font-size="9" text-anchor="middle" fill="#222">40</text>
<line x1="92" y1="209.5" x2="95" y2="209.5" stroke="#555" stroke-width="1"/>
<line x1="88" y1="199.5" x2="95" y2="199.5" stroke="#555" stroke-width="1"/>
<text transform="translate(80.8,199.5) rotate(-90)" font-size="9" text-anchor="middle" fill="#222">42</text>
<line x1="92" y1="189.5" x2="95" y2="189.5" stroke="#555" stroke-width="1"/>
<line x1="88" y1="178.5" x2="95" y2="178.5" stroke="#555" stroke-width="1"/>
<text transform="translate(80.8,178.5) rotate(-90)" font-size="9" text-anchor="middle" fill="#222">44</text>
<line x1="92" y1="168.5" x2="95" y2="168.5" stroke="#555" stroke-width="1"/>
<line x1="88" y1="158.5" x2="95" y2="158.5" stroke="#555" stroke-width="1"/>
<text transform="translate(80.8,158.5) rotate(-90)" font-size="9" text-anchor="middle" fill="#222">46</text>
<line x1="92" y1="148.5" x2="95" y2="148.5" stroke="#555" stroke-width="1"/>
<path d="M84.8,345.2 L84.8,357.2 L91.2,351.2 Z" fill="#000"/>
</svg><svg style="position:absolute;left:95px;top:155px" width="1043" height="577" viewBox="95 155 1043 577">
<rect x="95" y="155" width="1043" height="577" fill="#000"/>
<line x1="146.5" y1="155" x2="146.5" y2="732" stroke="#232323" stroke-width="1"/>
<line x1="248.5" y1="155" x2="248.5" y2="732" stroke="#232323" stroke-width="1"/>
<line x1="351.5" y1="155" x2="351.5" y2="732" stroke="#232323" stroke-width="1"/>
<line x1="453.5" y1="155" x2="453.5" y2="732" stroke="#232323" stroke-width="1"/>
<line x1="556.5" y1="155" x2="556.5" y2="732" stroke="#232323" stroke-width="1"/>
<line x1="658.5" y1="155" x2="658.5" y2="732" stroke="#232323" stroke-width="1"/>
<line x1="761.5" y1="155" x2="761.5" y2="732" stroke="#232323" stroke-width="1"/>
<line x1="863.5" y1="155" x2="863.5" y2="732" stroke="#232323" stroke-width="1"/>
<line x1="966.5" y1="155" x2="966.5" y2="732" stroke="#232323" stroke-width="1"/>
<line x1="1068.5" y1="155" x2="1068.5" y2="732" stroke="#232323" stroke-width="1"/>
<line x1="95" y1="629.5" x2="1138" y2="629.5" stroke="#232323" stroke-width="1"/>
<line x1="95" y1="527.5" x2="1138" y2="527.5" stroke="#232323" stroke-width="1"/>
<line x1="95" y1="424.5" x2="1138" y2="424.5" stroke="#232323" stroke-width="1"/>
<line x1="95" y1="322.5" x2="1138" y2="322.5" stroke="#232323" stroke-width="1"/>
<line x1="95" y1="219.5" x2="1138" y2="219.5" stroke="#232323" stroke-width="1"/>
<path d="M95 722.5h1m9 0h1m9 0h1m10 0h1m9 0h1m9 0h1m9 0h1m10 0h1m9 0h1m9 0h1m9 0h1m10 0h1m9 0h1m9 0h1m9 0h1m10 0h1m9 0h1m9 0h1m9 0h1m10 0h1m9 0h1m9 0h1m9 0h1m10 0h1m9 0h1m9 0h1m9 0h1m10 0h1m9 0h1m9 0h1m9 0h1m10 0h1m9 0h1m9 0h1m9 0h1m10 0h1m9 0h1m9 0h1m9 0h1m10 0h1m9 0h1m9 0h1m9 0h1m10 0h1m9 0h1m9 0h1m9 0h1m10 0h1m9 0h1m9 0h1m9 0h1m10 0h1m9 0h1m9 0h1m9 0h1m10 0h1m9 0h1m9 0h1m9 0h1m10 0h1m9 0h1m9 0h1m9 0h1m10 0h1m9 0h1m9 0h1m9 0h1m10 0h1m9 0h1m9 0h1m9 0h1m10 0h1m9 0h1m9 0h1m9 0h1m10 0h1m9 0h1m9 0h1m9 0h1m10 0h1m9 0h1m9 0h1m9 0h1m10 0h1m9 0h1m9 0h1m9 0h1m10 0h1m9 0h1m9 0h1m9 0h1m10 0h1m9 0h1m9 0h1m9 0h1m10 0h1m9 0h1m9 0h1m9 0h1m10 0h1m9 0h1m9 0h1M95 711.5h1m9 0h1m9 0h1m10 0h1m9 0h1m9 0h1m9 0h1m10 0h1m9 0h1m9 0h1m9 0h1m10 0h1m9 0h1m9 0h1m9 0h1m10 0h1m9 0h1m9 0h1m9 0h1m10 0h1m9 0h1m9 0h1m9 0h1m10 0h1m9 0h1m9 0h1m9 0h1m10 0h1m9 0h1m9 0h1m9 0h1m10 0h1m9 0h1m9 0h1m9 0h1m10 0h1m9 0h1m9 0h1m9 0h1m10 0h1m9 0h1m9 0h1m9 0h1m10 0h1m9 0h1m9 0h1m9 0h1m10 0h1m9 0h1m9 0h1m9 0h1m10 0h1m9 0h1m9 0h1m9 0h1m10 0h1m9 0h1m9 0h1m9 0h1m10 0h1m9 0h1m9 0h1m9 0h1m10 0h1m9 0h1m9 0h1m9 0h1m10 0h1m9 0h1m9 0h1m9 0h1m10 0h1m9 0h1m9 0h1m9 0h1m10 0h1m9 0h1m9 0h1m9 0h1m10 0h1m9 0h1m9 0h1m9 0h1m10 0h1m9 0h1m9 0h1m9 0h1m10 0h1m9 0h1m9 0h1m9 0h1m10 0h1m9 0h1m9 0h1m9 0h1m10 0h1m9 0h1m9 0h1m9 0h1m10 0h1m9 0h1m9 0h1M95 701.5h1m9 0h1m9 0h1m10 0h1m9 0h1m9 0h1m9 0h1m10 0h1m9 0h1m9 0h1m9 0h1m10 0h1m9 0h1m9 0h1m9 0h1m10 0h1m9 0h1m9 0h1m9 0h1m10 0h1m9 0h1m9 0h1m9 0h1m10 0h1m9 0h1m9 0h1m9 0h1m10 0h1m9 0h1m9 0h1m9 0h1m10 0h1m9 0h1m9 0h1m9 0h1m10 0h1m9 0h1m9 0h1m9 0h1m10 0h1m9 0h1m9 0h1m9 0h1m10 0h1m9 0h1m9 0h1m9 0h1m10 0h1m9 0h1m9 0h1m9 0h1m10 0h1m9 0h1m9 0h1m9 0h1m10 0h1m9 0h1m9 0h1m9 0h1m10 0h1m9 0h1m9 0h1m9 0h1m10 0h1m9 0h1m9 0h1m9 0h1m10 0h1m9 0h1m9 0h1m9 0h1m10 0h1m9 0h1m9 0h1m9 0h1m10 0h1m9 0h1m9 0h1m9 0h1m10 0h1m9 0h1m9 0h1m9 0h1m10 0h1m9 0h1m9 0h1m9 0h1m10 0h1m9 0h1m9 0h1m9 0h1m10 0h1m9 0h1m9 0h1m9 0h1m10 0h1m9 0h1m9 0h1m9 0h1m10 0h1m9 0h1m9 0h1M95 691.5h1m9 0h1m9 0h1m10 0h1m9 0h1m9 0h1m9 0h1m10 0h1m9 0h1m9 0h1m9 0h1m10 0h1m9 0h1m9 0h1m9 0h1m10 0h1m9 0h1m9 0h1m9 0h1m10 0h1m9 0h1m9 0h1m9 0h1m10 0h1m9 0h1m9 0h1m9 0h1m10 0h1m9 0h1m9 0h1m9 0h1m10 0h1m9 0h1m9 0h1m9 0h1m10 0h1m9 0h1m9 0h1m9 0h1m10 0h1m9 0h1m9 0h1m9 0h1m10 0h1m9 0h1m9 0h1m9 0h1m10 0h1m9 0h1m9 0h1m9 0h1m10 0h1m9 0h1m9 0h1m9 0h1m10 0h1m9 0h1m9 0h1m9 0h1m10 0h1m9 0h1m9 0h1m9 0h1m10 0h1m9 0h1m9 0h1m9 0h1m10 0h1m9 0h1m9 0h1m9 0h1m10 0h1m9 0h1m9 0h1m9 0h1m10 0h1m9 0h1m9 0h1m9 0h1m10 0h1m9 0h1m9 0h1m9 0h1m10 0h1m9 0h1m9 0h1m9 0h1m10 0h1m9 0h1m9 0h1m9 0h1m10 0h1m9 0h1m9 0h1m9 0h1m10 0h1m9 0h1m9 0h1m9 0h1m10 0h1m9 0h1m9 0h1M95 681.5h1m9 0h1m9 0h1m10 0h1m9 0h1m9 0h1m9 0h1m10 0h1m9 0h1m9 0h1m9 0h1m10 0h1m9 0h1m9 0h1m9 0h1m10 0h1m9 0h1m9 0h1m9 0h1m10 0h1m9 0h1m9 0h1m9 0h1m10 0h1m9 0h1m9 0h1m9 0h1m10 0h1m9 0h1m9 0h1m9 0h1m10 0h1m9 0h1m9 0h1m9 0h1m10 0h1m9 0h1m9 0h1m9 0h1m10 0h1m9 0h1m9 0h1m9 0h1m10 0h1m9 0h1m9 0h1m9 0h1m10 0h1m9 0h1m9 0h1m9 0h1m10 0h1m9 0h1m9 0h1m9 0h1m10 0h1m9 0h1m9 0h1m9 0h1m10 0h1m9 0h1m9 0h1m9 0h1m10 0h1m9 0h1m9 0h1m9 0h1m10 0h1m9 0h1m9 0h1m9 0h1m10 0h1m9 0h1m9 0h1m9 0h1m10 0h1m9 0h1m9 0h1m9 0h1m10 0h1m9 0h1m9 0h1m9 0h1m10 0h1m9 0h1m9 0h1m9 0h1m10 0h1m9 0h1m9 0h1m9 0h1m10 0h1m9 0h1m9 0h1m9 0h1m10 0h1m9 0h1m9 0h1m9 0h1m10 0h1m9 0h1m9 0h1M95 670.5h1m9 0h1m9 0h1m10 0h1m9 0h1m9 0h1m9 0h1m10 0h1m9 0h1m9 0h1m9 0h1m10 0h1m9 0h1m9 0h1m9 0h1m10 0h1m9 0h1m9 0h1m9 0h1m10 0h1m9 0h1m9 0h1m9 0h1m10 0h1m9 0h1m9 0h1m9 0h1m10 0h1m9 0h1m9 0h1m9 0h1m10 0h1m9 0h1m9 0h1m9 0h1m10 0h1m9 0h1m9 0h1m9 0h1m10 0h1m9 0h1m9 0h1m9 0h1m10 0h1m9 0h1m9 0h1m9 0h1m10 0h1m9 0h1m9 0h1m9 0h1m10 0h1m9 0h1m9 0h1m9 0h1m10 0h1m9 0h1m9 0h1m9 0h1m10 0h1m9 0h1m9 0h1m9 0h1m10 0h1m9 0h1m9 0h1m9 0h1m10 0h1m9 0h1m9 0h1m9 0h1m10 0h1m9 0h1m9 0h1m9 0h1m10 0h1m9 0h1m9 0h1m9 0h1m10 0h1m9 0h1m9 0h1m9 0h1m10 0h1m9 0h1m9 0h1m9 0h1m10 0h1m9 0h1m9 0h1m9 0h1m10 0h1m9 0h1m9 0h1m9 0h1m10 0h1m9 0h1m9 0h1m9 0h1m10 0h1m9 0h1m9 0h1M95 660.5h1m9 0h1m9 0h1m10 0h1m9 0h1m9 0h1m9 0h1m10 0h1m9 0h1m9 0h1m9 0h1m10 0h1m9 0h1m9 0h1m9 0h1m10 0h1m9 0h1m9 0h1m9 0h1m10 0h1m9 0h1m9 0h1m9 0h1m10 0h1m9 0h1m9 0h1m9 0h1m10 0h1m9 0h1m9 0h1m9 0h1m10 0h1m9 0h1m9 0h1m9 0h1m10 0h1m9 0h1m9 0h1m9 0h1m10 0h1m9 0h1m9 0h1m9 0h1m10 0h1m9 0h1m9 0h1m9 0h1m10 0h1m9 0h1m9 0h1m9 0h1m10 0h1m9 0h1m9 0h1m9 0h1m10 0h1m9 0h1m9 0h1m9 0h1m10 0h1m9 0h1m9 0h1m9 0h1m10 0h1m9 0h1m9 0h1m9 0h1m10 0h1m9 0h1m9 0h1m9 0h1m10 0h1m9 0h1m9 0h1m9 0h1m10 0h1m9 0h1m9 0h1m9 0h1m10 0h1m9 0h1m9 0h1m9 0h1m10 0h1m9 0h1m9 0h1m9 0h1m10 0h1m9 0h1m9 0h1m9 0h1m10 0h1m9 0h1m9 0h1m9 0h1m10 0h1m9 0h1m9 0h1m9 0h1m10 0h1m9 0h1m9 0h1M95 650.5h1m9 0h1m9 0h1m10 0h1m9 0h1m9 0h1m9 0h1m10 0h1m9 0h1m9 0h1m9 0h1m10 0h1m9 0h1m9 0h1m9 0h1m10 0h1m9 0h1m9 0h1m9 0h1m10 0h1m9 0h1m9 0h1m9 0h1m10 0h1m9 0h1m9 0h1m9 0h1m10 0h1m9 0h1m9 0h1m9 0h1m10 0h1m9 0h1m9 0h1m9 0h1m10 0h1m9 0h1m9 0h1m9 0h1m10 0h1m9 0h1m9 0h1m9 0h1m10 0h1m9 0h1m9 0h1m9 0h1m10 0h1m9 0h1m9 0h1m9 0h1m10 0h1m9 0h1m9 0h1m9 0h1m10 0h1m9 0h1m9 0h1m9 0h1m10 0h1m9 0h1m9 0h1m9 0h1m10 0h1m9 0h1m9 0h1m9 0h1m10 0h1m9 0h1m9 0h1m9 0h1m10 0h1m9 0h1m9 0h1m9 0h1m10 0h1m9 0h1m9 0h1m9 0h1m10 0h1m9 0h1m9 0h1m9 0h1m10 0h1m9 0h1m9 0h1m9 0h1m10 0h1m9 0h1m9 0h1m9 0h1m10 0h1m9 0h1m9 0h1m9 0h1m10 0h1m9 0h1m9 0h1m9 0h1m10 0h1m9 0h1m9 0h1M95 640.5h1m9 0h1m9 0h1m10 0h1m9 0h1m9 0h1m9 0h1m10 0h1m9 0h1m9 0h1m9 0h1m10 0h1m9 0h1m9 0h1m9 0h1m10 0h1m9 0h1m9 0h1m9 0h1m10 0h1m9 0h1m9 0h1m9 0h1m10 0h1m9 0h1m9 0h1m9 0h1m10 0h1m9 0h1m9 0h1m9 0h1m10 0h1m9 0h1m9 0h1m9 0h1m10 0h1m9 0h1m9 0h1m9 0h1m10 0h1m9 0h1m9 0h1m9 0h1m10 0h1m9 0h1m9 0h1m9 0h1m10 0h1m9 0h1m9 0h1m9 0h1m10 0h1m9 0h1m9 0h1m9 0h1m10 0h1m9 0h1m9 0h1m9 0h1m10 0h1m9 0h1m9 0h1m9 0h1m10 0h1m9 0h1m9 0h1m9 0h1m10 0h1m9 0h1m9 0h1m9 0h1m10 0h1m9 0h1m9 0h1m9 0h1m10 0h1m9 0h1m9 0h1m9 0h1m10 0h1m9 0h1m9 0h1m9 0h1m10 0h1m9 0h1m9 0h1m9 0h1m10 0h1m9 0h1m9 0h1m9 0h1m10 0h1m9 0h1m9 0h1m9 0h1m10 0h1m9 0h1m9 0h1m9 0h1m10 0h1m9 0h1m9 0h1M95 629.5h1m9 0h1m9 0h1m10 0h1m9 0h1m9 0h1m9 0h1m10 0h1m9 0h1m9 0h1m9 0h1m10 0h1m9 0h1m9 0h1m9 0h1m10 0h1m9 0h1m9 0h1m9 0h1m10 0h1m9 0h1m9 0h1m9 0h1m10 0h1m9 0h1m9 0h1m9 0h1m10 0h1m9 0h1m9 0h1m9 0h1m10 0h1m9 0h1m9 0h1m9 0h1m10 0h1m9 0h1m9 0h1m9 0h1m10 0h1m9 0h1m9 0h1m9 0h1m10 0h1m9 0h1m9 0h1m9 0h1m10 0h1m9 0h1m9 0h1m9 0h1m10 0h1m9 0h1m9 0h1m9 0h1m10 0h1m9 0h1m9 0h1m9 0h1m10 0h1m9 0h1m9 0h1m9 0h1m10 0h1m9 0h1m9 0h1m9 0h1m10 0h1m9 0h1m9 0h1m9 0h1m10 0h1m9 0h1m9 0h1m9 0h1m10 0h1m9 0h1m9 0h1m9 0h1m10 0h1m9 0h1m9 0h1m9 0h1m10 0h1m9 0h1m9 0h1m9 0h1m10 0h1m9 0h1m9 0h1m9 0h1m10 0h1m9 0h1m9 0h1m9 0h1m10 0h1m9 0h1m9 0h1m9 0h1m10 0h1m9 0h1m9 0h1M95 619.5h1m9 0h1m9 0h1m10 0h1m9 0h1m9 0h1m9 0h1m10 0h1m9 0h1m9 0h1m9 0h1m10 0h1m9 0h1m9 0h1m9 0h1m10 0h1m9 0h1m9 0h1m9 0h1m10 0h1m9 0h1m9 0h1m9 0h1m10 0h1m9 0h1m9 0h1m9 0h1m10 0h1m9 0h1m9 0h1m9 0h1m10 0h1m9 0h1m9 0h1m9 0h1m10 0h1m9 0h1m9 0h1m9 0h1m10 0h1m9 0h1m9 0h1m9 0h1m10 0h1m9 0h1m9 0h1m9 0h1m10 0h1m9 0h1m9 0h1m9 0h1m10 0h1m9 0h1m9 0h1m9 0h1m10 0h1m9 0h1m9 0h1m9 0h1m10 0h1m9 0h1m9 0h1m9 0h1m10 0h1m9 0h1m9 0h1m9 0h1m10 0h1m9 0h1m9 0h1m9 0h1m10 0h1m9 0h1m9 0h1m9 0h1m10 0h1m9 0h1m9 0h1m9 0h1m10 0h1m9 0h1m9 0h1m9 0h1m10 0h1m9 0h1m9 0h1m9 0h1m10 0h1m9 0h1m9 0h1m9 0h1m10 0h1m9 0h1m9 0h1m9 0h1m10 0h1m9 0h1m9 0h1m9 0h1m10 0h1m9 0h1m9 0h1M95 609.5h1m9 0h1m9 0h1m10 0h1m9 0h1m9 0h1m9 0h1m10 0h1m9 0h1m9 0h1m9 0h1m10 0h1m9 0h1m9 0h1m9 0h1m10 0h1m9 0h1m9 0h1m9 0h1m10 0h1m9 0h1m9 0h1m9 0h1m10 0h1m9 0h1m9 0h1m9 0h1m10 0h1m9 0h1m9 0h1m9 0h1m10 0h1m9 0h1m9 0h1m9 0h1m10 0h1m9 0h1m9 0h1m9 0h1m10 0h1m9 0h1m9 0h1m9 0h1m10 0h1m9 0h1m9 0h1m9 0h1m10 0h1m9 0h1m9 0h1m9 0h1m10 0h1m9 0h1m9 0h1m9 0h1m10 0h1m9 0h1m9 0h1m9 0h1m10 0h1m9 0h1m9 0h1m9 0h1m10 0h1m9 0h1m9 0h1m9 0h1m10 0h1m9 0h1m9 0h1m9 0h1m10 0h1m9 0h1m9 0h1m9 0h1m10 0h1m9 0h1m9 0h1m9 0h1m10 0h1m9 0h1m9 0h1m9 0h1m10 0h1m9 0h1m9 0h1m9 0h1m10 0h1m9 0h1m9 0h1m9 0h1m10 0h1m9 0h1m9 0h1m9 0h1m10 0h1m9 0h1m9 0h1m9 0h1m10 0h1m9 0h1m9 0h1M95 599.5h1m9 0h1m9 0h1m10 0h1m9 0h1m9 0h1m9 0h1m10 0h1m9 0h1m9 0h1m9 0h1m10 0h1m9 0h1m9 0h1m9 0h1m10 0h1m9 0h1m9 0h1m9 0h1m10 0h1m9 0h1m9 0h1m9 0h1m10 0h1m9 0h1m9 0h1m9 0h1m10 0h1m9 0h1m9 0h1m9 0h1m10 0h1m9 0h1m9 0h1m9 0h1m10 0h1m9 0h1m9 0h1m9 0h1m10 0h1m9 0h1m9 0h1m9 0h1m10 0h1m9 0h1m9 0h1m9 0h1m10 0h1m9 0h1m9 0h1m9 0h1m10 0h1m9 0h1m9 0h1m9 0h1m10 0h1m9 0h1m9 0h1m9 0h1m10 0h1m9 0h1m9 0h1m9 0h1m10 0h1m9 0h1m9 0h1m9 0h1m10 0h1m9 0h1m9 0h1m9 0h1m10 0h1m9 0h1m9 0h1m9 0h1m10 0h1m9 0h1m9 0h1m9 0h1m10 0h1m9 0h1m9 0h1m9 0h1m10 0h1m9 0h1m9 0h1m9 0h1m10 0h1m9 0h1m9 0h1m9 0h1m10 0h1m9 0h1m9 0h1m9 0h1m10 0h1m9 0h1m9 0h1m9 0h1m10 0h1m9 0h1m9 0h1M95 588.5h1m9 0h1m9 0h1m10 0h1m9 0h1m9 0h1m9 0h1m10 0h1m9 0h1m9 0h1m9 0h1m10 0h1m9 0h1m9 0h1m9 0h1m10 0h1m9 0h1m9 0h1m9 0h1m10 0h1m9 0h1m9 0h1m9 0h1m10 0h1m9 0h1m9 0h1m9 0h1m10 0h1m9 0h1m9 0h1m9 0h1m10 0h1m9 0h1m9 0h1m9 0h1m10 0h1m9 0h1m9 0h1m9 0h1m10 0h1m9 0h1m9 0h1m9 0h1m10 0h1m9 0h1m9 0h1m9 0h1m10 0h1m9 0h1m9 0h1m9 0h1m10 0h1m9 0h1m9 0h1m9 0h1m10 0h1m9 0h1m9 0h1m9 0h1m10 0h1m9 0h1m9 0h1m9 0h1m10 0h1m9 0h1m9 0h1m9 0h1m10 0h1m9 0h1m9 0h1m9 0h1m10 0h1m9 0h1m9 0h1m9 0h1m10 0h1m9 0h1m9 0h1m9 0h1m10 0h1m9 0h1m9 0h1m9 0h1m10 0h1m9 0h1m9 0h1m9 0h1m10 0h1m9 0h1m9 0h1m9 0h1m10 0h1m9 0h1m9 0h1m9 0h1m10 0h1m9 0h1m9 0h1m9 0h1m10 0h1m9 0h1m9 0h1M95 578.5h1m9 0h1m9 0h1m10 0h1m9 0h1m9 0h1m9 0h1m10 0h1m9 0h1m9 0h1m9 0h1m10 0h1m9 0h1m9 0h1m9 0h1m10 0h1m9 0h1m9 0h1m9 0h1m10 0h1m9 0h1m9 0h1m9 0h1m10 0h1m9 0h1m9 0h1m9 0h1m10 0h1m9 0h1m9 0h1m9 0h1m10 0h1m9 0h1m9 0h1m9 0h1m10 0h1m9 0h1m9 0h1m9 0h1m10 0h1m9 0h1m9 0h1m9 0h1m10 0h1m9 0h1m9 0h1m9 0h1m10 0h1m9 0h1m9 0h1m9 0h1m10 0h1m9 0h1m9 0h1m9 0h1m10 0h1m9 0h1m9 0h1m9 0h1m10 0h1m9 0h1m9 0h1m9 0h1m10 0h1m9 0h1m9 0h1m9 0h1m10 0h1m9 0h1m9 0h1m9 0h1m10 0h1m9 0h1m9 0h1m9 0h1m10 0h1m9 0h1m9 0h1m9 0h1m10 0h1m9 0h1m9 0h1m9 0h1m10 0h1m9 0h1m9 0h1m9 0h1m10 0h1m9 0h1m9 0h1m9 0h1m10 0h1m9 0h1m9 0h1m9 0h1m10 0h1m9 0h1m9 0h1m9 0h1m10 0h1m9 0h1m9 0h1M95 568.5h1m9 0h1m9 0h1m10 0h1m9 0h1m9 0h1m9 0h1m10 0h1m9 0h1m9 0h1m9 0h1m10 0h1m9 0h1m9 0h1m9 0h1m10 0h1m9 0h1m9 0h1m9 0h1m10 0h1m9 0h1m9 0h1m9 0h1m10 0h1m9 0h1m9 0h1m9 0h1m10 0h1m9 0h1m9 0h1m9 0h1m10 0h1m9 0h1m9 0h1m9 0h1m10 0h1m9 0h1m9 0h1m9 0h1m10 0h1m9 0h1m9 0h1m9 0h1m10 0h1m9 0h1m9 0h1m9 0h1m10 0h1m9 0h1m9 0h1m9 0h1m10 0h1m9 0h1m9 0h1m9 0h1m10 0h1m9 0h1m9 0h1m9 0h1m10 0h1m9 0h1m9 0h1m9 0h1m10 0h1m9 0h1m9 0h1m9 0h1m10 0h1m9 0h1m9 0h1m9 0h1m10 0h1m9 0h1m9 0h1m9 0h1m10 0h1m9 0h1m9 0h1m9 0h1m10 0h1m9 0h1m9 0h1m9 0h1m10 0h1m9 0h1m9 0h1m9 0h1m10 0h1m9 0h1m9 0h1m9 0h1m10 0h1m9 0h1m9 0h1m9 0h1m10 0h1m9 0h1m9 0h1m9 0h1m10 0h1m9 0h1m9 0h1M95 558.5h1m9 0h1m9 0h1m10 0h1m9 0h1m9 0h1m9 0h1m10 0h1m9 0h1m9 0h1m9 0h1m10 0h1m9 0h1m9 0h1m9 0h1m10 0h1m9 0h1m9 0h1m9 0h1m10 0h1m9 0h1m9 0h1m9 0h1m10 0h1m9 0h1m9 0h1m9 0h1m10 0h1m9 0h1m9 0h1m9 0h1m10 0h1m9 0h1m9 0h1m9 0h1m10 0h1m9 0h1m9 0h1m9 0h1m10 0h1m9 0h1m9 0h1m9 0h1m10 0h1m9 0h1m9 0h1m9 0h1m10 0h1m9 0h1m9 0h1m9 0h1m10 0h1m9 0h1m9 0h1m9 0h1m10 0h1m9 0h1m9 0h1m9 0h1m10 0h1m9 0h1m9 0h1m9 0h1m10 0h1m9 0h1m9 0h1m9 0h1m10 0h1m9 0h1m9 0h1m9 0h1m10 0h1m9 0h1m9 0h1m9 0h1m10 0h1m9 0h1m9 0h1m9 0h1m10 0h1m9 0h1m9 0h1m9 0h1m10 0h1m9 0h1m9 0h1m9 0h1m10 0h1m9 0h1m9 0h1m9 0h1m10 0h1m9 0h1m9 0h1m9 0h1m10 0h1m9 0h1m9 0h1m9 0h1m10 0h1m9 0h1m9 0h1M95 547.5h1m9 0h1m9 0h1m10 0h1m9 0h1m9 0h1m9 0h1m10 0h1m9 0h1m9 0h1m9 0h1m10 0h1m9 0h1m9 0h1m9 0h1m10 0h1m9 0h1m9 0h1m9 0h1m10 0h1m9 0h1m9 0h1m9 0h1m10 0h1m9 0h1m9 0h1m9 0h1m10 0h1m9 0h1m9 0h1m9 0h1m10 0h1m9 0h1m9 0h1m9 0h1m10 0h1m9 0h1m9 0h1m9 0h1m10 0h1m9 0h1m9 0h1m9 0h1m10 0h1m9 0h1m9 0h1m9 0h1m10 0h1m9 0h1m9 0h1m9 0h1m10 0h1m9 0h1m9 0h1m9 0h1m10 0h1m9 0h1m9 0h1m9 0h1m10 0h1m9 0h1m9 0h1m9 0h1m10 0h1m9 0h1m9 0h1m9 0h1m10 0h1m9 0h1m9 0h1m9 0h1m10 0h1m9 0h1m9 0h1m9 0h1m10 0h1m9 0h1m9 0h1m9 0h1m10 0h1m9 0h1m9 0h1m9 0h1m10 0h1m9 0h1m9 0h1m9 0h1m10 0h1m9 0h1m9 0h1m9 0h1m10 0h1m9 0h1m9 0h1m9 0h1m10 0h1m9 0h1m9 0h1m9 0h1m10 0h1m9 0h1m9 0h1M95 537.5h1m9 0h1m9 0h1m10 0h1m9 0h1m9 0h1m9 0h1m10 0h1m9 0h1m9 0h1m9 0h1m10 0h1m9 0h1m9 0h1m9 0h1m10 0h1m9 0h1m9 0h1m9 0h1m10 0h1m9 0h1m9 0h1m9 0h1m10 0h1m9 0h1m9 0h1m9 0h1m10 0h1m9 0h1m9 0h1m9 0h1m10 0h1m9 0h1m9 0h1m9 0h1m10 0h1m9 0h1m9 0h1m9 0h1m10 0h1m9 0h1m9 0h1m9 0h1m10 0h1m9 0h1m9 0h1m9 0h1m10 0h1m9 0h1m9 0h1m9 0h1m10 0h1m9 0h1m9 0h1m9 0h1m10 0h1m9 0h1m9 0h1m9 0h1m10 0h1m9 0h1m9 0h1m9 0h1m10 0h1m9 0h1m9 0h1m9 0h1m10 0h1m9 0h1m9 0h1m9 0h1m10 0h1m9 0h1m9 0h1m9 0h1m10 0h1m9 0h1m9 0h1m9 0h1m10 0h1m9 0h1m9 0h1m9 0h1m10 0h1m9 0h1m9 0h1m9 0h1m10 0h1m9 0h1m9 0h1m9 0h1m10 0h1m9 0h1m9 0h1m9 0h1m10 0h1m9 0h1m9 0h1m9 0h1m10 0h1m9 0h1m9 0h1M95 527.5h1m9 0h1m9 0h1m10 0h1m9 0h1m9 0h1m9 0h1m10 0h1m9 0h1m9 0h1m9 0h1m10 0h1m9 0h1m9 0h1m9 0h1m10 0h1m9 0h1m9 0h1m9 0h1m10 0h1m9 0h1m9 0h1m9 0h1m10 0h1m9 0h1m9 0h1m9 0h1m10 0h1m9 0h1m9 0h1m9 0h1m10 0h1m9 0h1m9 0h1m9 0h1m10 0h1m9 0h1m9 0h1m9 0h1m10 0h1m9 0h1m9 0h1m9 0h1m10 0h1m9 0h1m9 0h1m9 0h1m10 0h1m9 0h1m9 0h1m9 0h1m10 0h1m9 0h1m9 0h1m9 0h1m10 0h1m9 0h1m9 0h1m9 0h1m10 0h1m9 0h1m9 0h1m9 0h1m10 0h1m9 0h1m9 0h1m9 0h1m10 0h1m9 0h1m9 0h1m9 0h1m10 0h1m9 0h1m9 0h1m9 0h1m10 0h1m9 0h1m9 0h1m9 0h1m10 0h1m9 0h1m9 0h1m9 0h1m10 0h1m9 0h1m9 0h1m9 0h1m10 0h1m9 0h1m9 0h1m9 0h1m10 0h1m9 0h1m9 0h1m9 0h1m10 0h1m9 0h1m9 0h1m9 0h1m10 0h1m9 0h1m9 0h1M95 517.5h1m9 0h1m9 0h1m10 0h1m9 0h1m9 0h1m9 0h1m10 0h1m9 0h1m9 0h1m9 0h1m10 0h1m9 0h1m9 0h1m9 0h1m10 0h1m9 0h1m9 0h1m9 0h1m10 0h1m9 0h1m9 0h1m9 0h1m10 0h1m9 0h1m9 0h1m9 0h1m10 0h1m9 0h1m9 0h1m9 0h1m10 0h1m9 0h1m9 0h1m9 0h1m10 0h1m9 0h1m9 0h1m9 0h1m10 0h1m9 0h1m9 0h1m9 0h1m10 0h1m9 0h1m9 0h1m9 0h1m10 0h1m9 0h1m9 0h1m9 0h1m10 0h1m9 0h1m9 0h1m9 0h1m10 0h1m9 0h1m9 0h1m9 0h1m10 0h1m9 0h1m9 0h1m9 0h1m10 0h1m9 0h1m9 0h1m9 0h1m10 0h1m9 0h1m9 0h1m9 0h1m10 0h1m9 0h1m9 0h1m9 0h1m10 0h1m9 0h1m9 0h1m9 0h1m10 0h1m9 0h1m9 0h1m9 0h1m10 0h1m9 0h1m9 0h1m9 0h1m10 0h1m9 0h1m9 0h1m9 0h1m10 0h1m9 0h1m9 0h1m9 0h1m10 0h1m9 0h1m9 0h1m9 0h1m10 0h1m9 0h1m9 0h1M95 506.5h1m9 0h1m9 0h1m10 0h1m9 0h1m9 0h1m9 0h1m10 0h1m9 0h1m9 0h1m9 0h1m10 0h1m9 0h1m9 0h1m9 0h1m10 0h1m9 0h1m9 0h1m9 0h1m10 0h1m9 0h1m9 0h1m9 0h1m10 0h1m9 0h1m9 0h1m9 0h1m10 0h1m9 0h1m9 0h1m9 0h1m10 0h1m9 0h1m9 0h1m9 0h1m10 0h1m9 0h1m9 0h1m9 0h1m10 0h1m9 0h1m9 0h1m9 0h1m10 0h1m9 0h1m9 0h1m9 0h1m10 0h1m9 0h1m9 0h1m9 0h1m10 0h1m9 0h1m9 0h1m9 0h1m10 0h1m9 0h1m9 0h1m9 0h1m10 0h1m9 0h1m9 0h1m9 0h1m10 0h1m9 0h1m9 0h1m9 0h1m10 0h1m9 0h1m9 0h1m9 0h1m10 0h1m9 0h1m9 0h1m9 0h1m10 0h1m9 0h1m9 0h1m9 0h1m10 0h1m9 0h1m9 0h1m9 0h1m10 0h1m9 0h1m9 0h1m9 0h1m10 0h1m9 0h1m9 0h1m9 0h1m10 0h1m9 0h1m9 0h1m9 0h1m10 0h1m9 0h1m9 0h1m9 0h1m10 0h1m9 0h1m9 0h1M95 496.5h1m9 0h1m9 0h1m10 0h1m9 0h1m9 0h1m9 0h1m10 0h1m9 0h1m9 0h1m9 0h1m10 0h1m9 0h1m9 0h1m9 0h1m10 0h1m9 0h1m9 0h1m9 0h1m10 0h1m9 0h1m9 0h1m9 0h1m10 0h1m9 0h1m9 0h1m9 0h1m10 0h1m9 0h1m9 0h1m9 0h1m10 0h1m9 0h1m9 0h1m9 0h1m10 0h1m9 0h1m9 0h1m9 0h1m10 0h1m9 0h1m9 0h1m9 0h1m10 0h1m9 0h1m9 0h1m9 0h1m10 0h1m9 0h1m9 0h1m9 0h1m10 0h1m9 0h1m9 0h1m9 0h1m10 0h1m9 0h1m9 0h1m9 0h1m10 0h1m9 0h1m9 0h1m9 0h1m10 0h1m9 0h1m9 0h1m9 0h1m10 0h1m9 0h1m9 0h1m9 0h1m10 0h1m9 0h1m9 0h1m9 0h1m10 0h1m9 0h1m9 0h1m9 0h1m10 0h1m9 0h1m9 0h1m9 0h1m10 0h1m9 0h1m9 0h1m9 0h1m10 0h1m9 0h1m9 0h1m9 0h1m10 0h1m9 0h1m9 0h1m9 0h1m10 0h1m9 0h1m9 0h1m9 0h1m10 0h1m9 0h1m9 0h1M95 486.5h1m9 0h1m9 0h1m10 0h1m9 0h1m9 0h1m9 0h1m10 0h1m9 0h1m9 0h1m9 0h1m10 0h1m9 0h1m9 0h1m9 0h1m10 0h1m9 0h1m9 0h1m9 0h1m10 0h1m9 0h1m9 0h1m9 0h1m10 0h1m9 0h1m9 0h1m9 0h1m10 0h1m9 0h1m9 0h1m9 0h1m10 0h1m9 0h1m9 0h1m9 0h1m10 0h1m9 0h1m9 0h1m9 0h1m10 0h1m9 0h1m9 0h1m9 0h1m10 0h1m9 0h1m9 0h1m9 0h1m10 0h1m9 0h1m9 0h1m9 0h1m10 0h1m9 0h1m9 0h1m9 0h1m10 0h1m9 0h1m9 0h1m9 0h1m10 0h1m9 0h1m9 0h1m9 0h1m10 0h1m9 0h1m9 0h1m9 0h1m10 0h1m9 0h1m9 0h1m9 0h1m10 0h1m9 0h1m9 0h1m9 0h1m10 0h1m9 0h1m9 0h1m9 0h1m10 0h1m9 0h1m9 0h1m9 0h1m10 0h1m9 0h1m9 0h1m9 0h1m10 0h1m9 0h1m9 0h1m9 0h1m10 0h1m9 0h1m9 0h1m9 0h1m10 0h1m9 0h1m9 0h1m9 0h1m10 0h1m9 0h1m9 0h1M95 476.5h1m9 0h1m9 0h1m10 0h1m9 0h1m9 0h1m9 0h1m10 0h1m9 0h1m9 0h1m9 0h1m10 0h1m9 0h1m9 0h1m9 0h1m10 0h1m9 0h1m9 0h1m9 0h1m10 0h1m9 0h1m9 0h1m9 0h1m10 0h1m9 0h1m9 0h1m9 0h1m10 0h1m9 0h1m9 0h1m9 0h1m10 0h1m9 0h1m9 0h1m9 0h1m10 0h1m9 0h1m9 0h1m9 0h1m10 0h1m9 0h1m9 0h1m9 0h1m10 0h1m9 0h1m9 0h1m9 0h1m10 0h1m9 0h1m9 0h1m9 0h1m10 0h1m9 0h1m9 0h1m9 0h1m10 0h1m9 0h1m9 0h1m9 0h1m10 0h1m9 0h1m9 0h1m9 0h1m10 0h1m9 0h1m9 0h1m9 0h1m10 0h1m9 0h1m9 0h1m9 0h1m10 0h1m9 0h1m9 0h1m9 0h1m10 0h1m9 0h1m9 0h1m9 0h1m10 0h1m9 0h1m9 0h1m9 0h1m10 0h1m9 0h1m9 0h1m9 0h1m10 0h1m9 0h1m9 0h1m9 0h1m10 0h1m9 0h1m9 0h1m9 0h1m10 0h1m9 0h1m9 0h1m9 0h1m10 0h1m9 0h1m9 0h1M95 465.5h1m9 0h1m9 0h1m10 0h1m9 0h1m9 0h1m9 0h1m10 0h1m9 0h1m9 0h1m9 0h1m10 0h1m9 0h1m9 0h1m9 0h1m10 0h1m9 0h1m9 0h1m9 0h1m10 0h1m9 0h1m9 0h1m9 0h1m10 0h1m9 0h1m9 0h1m9 0h1m10 0h1m9 0h1m9 0h1m9 0h1m10 0h1m9 0h1m9 0h1m9 0h1m10 0h1m9 0h1m9 0h1m9 0h1m10 0h1m9 0h1m9 0h1m9 0h1m10 0h1m9 0h1m9 0h1m9 0h1m10 0h1m9 0h1m9 0h1m9 0h1m10 0h1m9 0h1m9 0h1m9 0h1m10 0h1m9 0h1m9 0h1m9 0h1m10 0h1m9 0h1m9 0h1m9 0h1m10 0h1m9 0h1m9 0h1m9 0h1m10 0h1m9 0h1m9 0h1m9 0h1m10 0h1m9 0h1m9 0h1m9 0h1m10 0h1m9 0h1m9 0h1m9 0h1m10 0h1m9 0h1m9 0h1m9 0h1m10 0h1m9 0h1m9 0h1m9 0h1m10 0h1m9 0h1m9 0h1m9 0h1m10 0h1m9 0h1m9 0h1m9 0h1m10 0h1m9 0h1m9 0h1m9 0h1m10 0h1m9 0h1m9 0h1M95 455.5h1m9 0h1m9 0h1m10 0h1m9 0h1m9 0h1m9 0h1m10 0h1m9 0h1m9 0h1m9 0h1m10 0h1m9 0h1m9 0h1m9 0h1m10 0h1m9 0h1m9 0h1m9 0h1m10 0h1m9 0h1m9 0h1m9 0h1m10 0h1m9 0h1m9 0h1m9 0h1m10 0h1m9 0h1m9 0h1m9 0h1m10 0h1m9 0h1m9 0h1m9 0h1m10 0h1m9 0h1m9 0h1m9 0h1m10 0h1m9 0h1m9 0h1m9 0h1m10 0h1m9 0h1m9 0h1m9 0h1m10 0h1m9 0h1m9 0h1m9 0h1m10 0h1m9 0h1m9 0h1m9 0h1m10 0h1m9 0h1m9 0h1m9 0h1m10 0h1m9 0h1m9 0h1m9 0h1m10 0h1m9 0h1m9 0h1m9 0h1m10 0h1m9 0h1m9 0h1m9 0h1m10 0h1m9 0h1m9 0h1m9 0h1m10 0h1m9 0h1m9 0h1m9 0h1m10 0h1m9 0h1m9 0h1m9 0h1m10 0h1m9 0h1m9 0h1m9 0h1m10 0h1m9 0h1m9 0h1m9 0h1m10 0h1m9 0h1m9 0h1m9 0h1m10 0h1m9 0h1m9 0h1m9 0h1m10 0h1m9 0h1m9 0h1M95 445.5h1m9 0h1m9 0h1m10 0h1m9 0h1m9 0h1m9 0h1m10 0h1m9 0h1m9 0h1m9 0h1m10 0h1m9 0h1m9 0h1m9 0h1m10 0h1m9 0h1m9 0h1m9 0h1m10 0h1m9 0h1m9 0h1m9 0h1m10 0h1m9 0h1m9 0h1m9 0h1m10 0h1m9 0h1m9 0h1m9 0h1m10 0h1m9 0h1m9 0h1m9 0h1m10 0h1m9 0h1m9 0h1m9 0h1m10 0h1m9 0h1m9 0h1m9 0h1m10 0h1m9 0h1m9 0h1m9 0h1m10 0h1m9 0h1m9 0h1m9 0h1m10 0h1m9 0h1m9 0h1m9 0h1m10 0h1m9 0h1m9 0h1m9 0h1m10 0h1m9 0h1m9 0h1m9 0h1m10 0h1m9 0h1m9 0h1m9 0h1m10 0h1m9 0h1m9 0h1m9 0h1m10 0h1m9 0h1m9 0h1m9 0h1m10 0h1m9 0h1m9 0h1m9 0h1m10 0h1m9 0h1m9 0h1m9 0h1m10 0h1m9 0h1m9 0h1m9 0h1m10 0h1m9 0h1m9 0h1m9 0h1m10 0h1m9 0h1m9 0h1m9 0h1m10 0h1m9 0h1m9 0h1m9 0h1m10 0h1m9 0h1m9 0h1M95 435.5h1m9 0h1m9 0h1m10 0h1m9 0h1m9 0h1m9 0h1m10 0h1m9 0h1m9 0h1m9 0h1m10 0h1m9 0h1m9 0h1m9 0h1m10 0h1m9 0h1m9 0h1m9 0h1m10 0h1m9 0h1m9 0h1m9 0h1m10 0h1m9 0h1m9 0h1m9 0h1m10 0h1m9 0h1m9 0h1m9 0h1m10 0h1m9 0h1m9 0h1m9 0h1m10 0h1m9 0h1m9 0h1m9 0h1m10 0h1m9 0h1m9 0h1m9 0h1m10 0h1m9 0h1m9 0h1m9 0h1m10 0h1m9 0h1m9 0h1m9 0h1m10 0h1m9 0h1m9 0h1m9 0h1m10 0h1m9 0h1m9 0h1m9 0h1m10 0h1m9 0h1m9 0h1m9 0h1m10 0h1m9 0h1m9 0h1m9 0h1m10 0h1m9 0h1m9 0h1m9 0h1m10 0h1m9 0h1m9 0h1m9 0h1m10 0h1m9 0h1m9 0h1m9 0h1m10 0h1m9 0h1m9 0h1m9 0h1m10 0h1m9 0h1m9 0h1m9 0h1m10 0h1m9 0h1m9 0h1m9 0h1m10 0h1m9 0h1m9 0h1m9 0h1m10 0h1m9 0h1m9 0h1m9 0h1m10 0h1m9 0h1m9 0h1M95 424.5h1m9 0h1m9 0h1m10 0h1m9 0h1m9 0h1m9 0h1m10 0h1m9 0h1m9 0h1m9 0h1m10 0h1m9 0h1m9 0h1m9 0h1m10 0h1m9 0h1m9 0h1m9 0h1m10 0h1m9 0h1m9 0h1m9 0h1m10 0h1m9 0h1m9 0h1m9 0h1m10 0h1m9 0h1m9 0h1m9 0h1m10 0h1m9 0h1m9 0h1m9 0h1m10 0h1m9 0h1m9 0h1m9 0h1m10 0h1m9 0h1m9 0h1m9 0h1m10 0h1m9 0h1m9 0h1m9 0h1m10 0h1m9 0h1m9 0h1m9 0h1m10 0h1m9 0h1m9 0h1m9 0h1m10 0h1m9 0h1m9 0h1m9 0h1m10 0h1m9 0h1m9 0h1m9 0h1m10 0h1m9 0h1m9 0h1m9 0h1m10 0h1m9 0h1m9 0h1m9 0h1m10 0h1m9 0h1m9 0h1m9 0h1m10 0h1m9 0h1m9 0h1m9 0h1m10 0h1m9 0h1m9 0h1m9 0h1m10 0h1m9 0h1m9 0h1m9 0h1m10 0h1m9 0h1m9 0h1m9 0h1m10 0h1m9 0h1m9 0h1m9 0h1m10 0h1m9 0h1m9 0h1m9 0h1m10 0h1m9 0h1m9 0h1M95 414.5h1m9 0h1m9 0h1m10 0h1m9 0h1m9 0h1m9 0h1m10 0h1m9 0h1m9 0h1m9 0h1m10 0h1m9 0h1m9 0h1m9 0h1m10 0h1m9 0h1m9 0h1m9 0h1m10 0h1m9 0h1m9 0h1m9 0h1m10 0h1m9 0h1m9 0h1m9 0h1m10 0h1m9 0h1m9 0h1m9 0h1m10 0h1m9 0h1m9 0h1m9 0h1m10 0h1m9 0h1m9 0h1m9 0h1m10 0h1m9 0h1m9 0h1m9 0h1m10 0h1m9 0h1m9 0h1m9 0h1m10 0h1m9 0h1m9 0h1m9 0h1m10 0h1m9 0h1m9 0h1m9 0h1m10 0h1m9 0h1m9 0h1m9 0h1m10 0h1m9 0h1m9 0h1m9 0h1m10 0h1m9 0h1m9 0h1m9 0h1m10 0h1m9 0h1m9 0h1m9 0h1m10 0h1m9 0h1m9 0h1m9 0h1m10 0h1m9 0h1m9 0h1m9 0h1m10 0h1m9 0h1m9 0h1m9 0h1m10 0h1m9 0h1m9 0h1m9 0h1m10 0h1m9 0h1m9 0h1m9 0h1m10 0h1m9 0h1m9 0h1m9 0h1m10 0h1m9 0h1m9 0h1m9 0h1m10 0h1m9 0h1m9 0h1M95 404.5h1m9 0h1m9 0h1m10 0h1m9 0h1m9 0h1m9 0h1m10 0h1m9 0h1m9 0h1m9 0h1m10 0h1m9 0h1m9 0h1m9 0h1m10 0h1m9 0h1m9 0h1m9 0h1m10 0h1m9 0h1m9 0h1m9 0h1m10 0h1m9 0h1m9 0h1m9 0h1m10 0h1m9 0h1m9 0h1m9 0h1m10 0h1m9 0h1m9 0h1m9 0h1m10 0h1m9 0h1m9 0h1m9 0h1m10 0h1m9 0h1m9 0h1m9 0h1m10 0h1m9 0h1m9 0h1m9 0h1m10 0h1m9 0h1m9 0h1m9 0h1m10 0h1m9 0h1m9 0h1m9 0h1m10 0h1m9 0h1m9 0h1m9 0h1m10 0h1m9 0h1m9 0h1m9 0h1m10 0h1m9 0h1m9 0h1m9 0h1m10 0h1m9 0h1m9 0h1m9 0h1m10 0h1m9 0h1m9 0h1m9 0h1m10 0h1m9 0h1m9 0h1m9 0h1m10 0h1m9 0h1m9 0h1m9 0h1m10 0h1m9 0h1m9 0h1m9 0h1m10 0h1m9 0h1m9 0h1m9 0h1m10 0h1m9 0h1m9 0h1m9 0h1m10 0h1m9 0h1m9 0h1m9 0h1m10 0h1m9 0h1m9 0h1M95 394.5h1m9 0h1m9 0h1m10 0h1m9 0h1m9 0h1m9 0h1m10 0h1m9 0h1m9 0h1m9 0h1m10 0h1m9 0h1m9 0h1m9 0h1m10 0h1m9 0h1m9 0h1m9 0h1m10 0h1m9 0h1m9 0h1m9 0h1m10 0h1m9 0h1m9 0h1m9 0h1m10 0h1m9 0h1m9 0h1m9 0h1m10 0h1m9 0h1m9 0h1m9 0h1m10 0h1m9 0h1m9 0h1m9 0h1m10 0h1m9 0h1m9 0h1m9 0h1m10 0h1m9 0h1m9 0h1m9 0h1m10 0h1m9 0h1m9 0h1m9 0h1m10 0h1m9 0h1m9 0h1m9 0h1m10 0h1m9 0h1m9 0h1m9 0h1m10 0h1m9 0h1m9 0h1m9 0h1m10 0h1m9 0h1m9 0h1m9 0h1m10 0h1m9 0h1m9 0h1m9 0h1m10 0h1m9 0h1m9 0h1m9 0h1m10 0h1m9 0h1m9 0h1m9 0h1m10 0h1m9 0h1m9 0h1m9 0h1m10 0h1m9 0h1m9 0h1m9 0h1m10 0h1m9 0h1m9 0h1m9 0h1m10 0h1m9 0h1m9 0h1m9 0h1m10 0h1m9 0h1m9 0h1m9 0h1m10 0h1m9 0h1m9 0h1M95 383.5h1m9 0h1m9 0h1m10 0h1m9 0h1m9 0h1m9 0h1m10 0h1m9 0h1m9 0h1m9 0h1m10 0h1m9 0h1m9 0h1m9 0h1m10 0h1m9 0h1m9 0h1m9 0h1m10 0h1m9 0h1m9 0h1m9 0h1m10 0h1m9 0h1m9 0h1m9 0h1m10 0h1m9 0h1m9 0h1m9 0h1m10 0h1m9 0h1m9 0h1m9 0h1m10 0h1m9 0h1m9 0h1m9 0h1m10 0h1m9 0h1m9 0h1m9 0h1m10 0h1m9 0h1m9 0h1m9 0h1m10 0h1m9 0h1m9 0h1m9 0h1m10 0h1m9 0h1m9 0h1m9 0h1m10 0h1m9 0h1m9 0h1m9 0h1m10 0h1m9 0h1m9 0h1m9 0h1m10 0h1m9 0h1m9 0h1m9 0h1m10 0h1m9 0h1m9 0h1m9 0h1m10 0h1m9 0h1m9 0h1m9 0h1m10 0h1m9 0h1m9 0h1m9 0h1m10 0h1m9 0h1m9 0h1m9 0h1m10 0h1m9 0h1m9 0h1m9 0h1m10 0h1m9 0h1m9 0h1m9 0h1m10 0h1m9 0h1m9 0h1m9 0h1m10 0h1m9 0h1m9 0h1m9 0h1m10 0h1m9 0h1m9 0h1M95 373.5h1m9 0h1m9 0h1m10 0h1m9 0h1m9 0h1m9 0h1m10 0h1m9 0h1m9 0h1m9 0h1m10 0h1m9 0h1m9 0h1m9 0h1m10 0h1m9 0h1m9 0h1m9 0h1m10 0h1m9 0h1m9 0h1m9 0h1m10 0h1m9 0h1m9 0h1m9 0h1m10 0h1m9 0h1m9 0h1m9 0h1m10 0h1m9 0h1m9 0h1m9 0h1m10 0h1m9 0h1m9 0h1m9 0h1m10 0h1m9 0h1m9 0h1m9 0h1m10 0h1m9 0h1m9 0h1m9 0h1m10 0h1m9 0h1m9 0h1m9 0h1m10 0h1m9 0h1m9 0h1m9 0h1m10 0h1m9 0h1m9 0h1m9 0h1m10 0h1m9 0h1m9 0h1m9 0h1m10 0h1m9 0h1m9 0h1m9 0h1m10 0h1m9 0h1m9 0h1m9 0h1m10 0h1m9 0h1m9 0h1m9 0h1m10 0h1m9 0h1m9 0h1m9 0h1m10 0h1m9 0h1m9 0h1m9 0h1m10 0h1m9 0h1m9 0h1m9 0h1m10 0h1m9 0h1m9 0h1m9 0h1m10 0h1m9 0h1m9 0h1m9 0h1m10 0h1m9 0h1m9 0h1m9 0h1m10 0h1m9 0h1m9 0h1M95 363.5h1m9 0h1m9 0h1m10 0h1m9 0h1m9 0h1m9 0h1m10 0h1m9 0h1m9 0h1m9 0h1m10 0h1m9 0h1m9 0h1m9 0h1m10 0h1m9 0h1m9 0h1m9 0h1m10 0h1m9 0h1m9 0h1m9 0h1m10 0h1m9 0h1m9 0h1m9 0h1m10 0h1m9 0h1m9 0h1m9 0h1m10 0h1m9 0h1m9 0h1m9 0h1m10 0h1m9 0h1m9 0h1m9 0h1m10 0h1m9 0h1m9 0h1m9 0h1m10 0h1m9 0h1m9 0h1m9 0h1m10 0h1m9 0h1m9 0h1m9 0h1m10 0h1m9 0h1m9 0h1m9 0h1m10 0h1m9 0h1m9 0h1m9 0h1m10 0h1m9 0h1m9 0h1m9 0h1m10 0h1m9 0h1m9 0h1m9 0h1m10 0h1m9 0h1m9 0h1m9 0h1m10 0h1m9 0h1m9 0h1m9 0h1m10 0h1m9 0h1m9 0h1m9 0h1m10 0h1m9 0h1m9 0h1m9 0h1m10 0h1m9 0h1m9 0h1m9 0h1m10 0h1m9 0h1m9 0h1m9 0h1m10 0h1m9 0h1m9 0h1m9 0h1m10 0h1m9 0h1m9 0h1m9 0h1m10 0h1m9 0h1m9 0h1M95 353.5h1m9 0h1m9 0h1m10 0h1m9 0h1m9 0h1m9 0h1m10 0h1m9 0h1m9 0h1m9 0h1m10 0h1m9 0h1m9 0h1m9 0h1m10 0h1m9 0h1m9 0h1m9 0h1m10 0h1m9 0h1m9 0h1m9 0h1m10 0h1m9 0h1m9 0h1m9 0h1m10 0h1m9 0h1m9 0h1m9 0h1m10 0h1m9 0h1m9 0h1m9 0h1m10 0h1m9 0h1m9 0h1m9 0h1m10 0h1m9 0h1m9 0h1m9 0h1m10 0h1m9 0h1m9 0h1m9 0h1m10 0h1m9 0h1m9 0h1m9 0h1m10 0h1m9 0h1m9 0h1m9 0h1m10 0h1m9 0h1m9 0h1m9 0h1m10 0h1m9 0h1m9 0h1m9 0h1m10 0h1m9 0h1m9 0h1m9 0h1m10 0h1m9 0h1m9 0h1m9 0h1m10 0h1m9 0h1m9 0h1m9 0h1m10 0h1m9 0h1m9 0h1m9 0h1m10 0h1m9 0h1m9 0h1m9 0h1m10 0h1m9 0h1m9 0h1m9 0h1m10 0h1m9 0h1m9 0h1m9 0h1m10 0h1m9 0h1m9 0h1m9 0h1m10 0h1m9 0h1m9 0h1m9 0h1m10 0h1m9 0h1m9 0h1M95 342.5h1m9 0h1m9 0h1m10 0h1m9 0h1m9 0h1m9 0h1m10 0h1m9 0h1m9 0h1m9 0h1m10 0h1m9 0h1m9 0h1m9 0h1m10 0h1m9 0h1m9 0h1m9 0h1m10 0h1m9 0h1m9 0h1m9 0h1m10 0h1m9 0h1m9 0h1m9 0h1m10 0h1m9 0h1m9 0h1m9 0h1m10 0h1m9 0h1m9 0h1m9 0h1m10 0h1m9 0h1m9 0h1m9 0h1m10 0h1m9 0h1m9 0h1m9 0h1m10 0h1m9 0h1m9 0h1m9 0h1m10 0h1m9 0h1m9 0h1m9 0h1m10 0h1m9 0h1m9 0h1m9 0h1m10 0h1m9 0h1m9 0h1m9 0h1m10 0h1m9 0h1m9 0h1m9 0h1m10 0h1m9 0h1m9 0h1m9 0h1m10 0h1m9 0h1m9 0h1m9 0h1m10 0h1m9 0h1m9 0h1m9 0h1m10 0h1m9 0h1m9 0h1m9 0h1m10 0h1m9 0h1m9 0h1m9 0h1m10 0h1m9 0h1m9 0h1m9 0h1m10 0h1m9 0h1m9 0h1m9 0h1m10 0h1m9 0h1m9 0h1m9 0h1m10 0h1m9 0h1m9 0h1m9 0h1m10 0h1m9 0h1m9 0h1M95 332.5h1m9 0h1m9 0h1m10 0h1m9 0h1m9 0h1m9 0h1m10 0h1m9 0h1m9 0h1m9 0h1m10 0h1m9 0h1m9 0h1m9 0h1m10 0h1m9 0h1m9 0h1m9 0h1m10 0h1m9 0h1m9 0h1m9 0h1m10 0h1m9 0h1m9 0h1m9 0h1m10 0h1m9 0h1m9 0h1m9 0h1m10 0h1m9 0h1m9 0h1m9 0h1m10 0h1m9 0h1m9 0h1m9 0h1m10 0h1m9 0h1m9 0h1m9 0h1m10 0h1m9 0h1m9 0h1m9 0h1m10 0h1m9 0h1m9 0h1m9 0h1m10 0h1m9 0h1m9 0h1m9 0h1m10 0h1m9 0h1m9 0h1m9 0h1m10 0h1m9 0h1m9 0h1m9 0h1m10 0h1m9 0h1m9 0h1m9 0h1m10 0h1m9 0h1m9 0h1m9 0h1m10 0h1m9 0h1m9 0h1m9 0h1m10 0h1m9 0h1m9 0h1m9 0h1m10 0h1m9 0h1m9 0h1m9 0h1m10 0h1m9 0h1m9 0h1m9 0h1m10 0h1m9 0h1m9 0h1m9 0h1m10 0h1m9 0h1m9 0h1m9 0h1m10 0h1m9 0h1m9 0h1m9 0h1m10 0h1m9 0h1m9 0h1M95 322.5h1m9 0h1m9 0h1m10 0h1m9 0h1m9 0h1m9 0h1m10 0h1m9 0h1m9 0h1m9 0h1m10 0h1m9 0h1m9 0h1m9 0h1m10 0h1m9 0h1m9 0h1m9 0h1m10 0h1m9 0h1m9 0h1m9 0h1m10 0h1m9 0h1m9 0h1m9 0h1m10 0h1m9 0h1m9 0h1m9 0h1m10 0h1m9 0h1m9 0h1m9 0h1m10 0h1m9 0h1m9 0h1m9 0h1m10 0h1m9 0h1m9 0h1m9 0h1m10 0h1m9 0h1m9 0h1m9 0h1m10 0h1m9 0h1m9 0h1m9 0h1m10 0h1m9 0h1m9 0h1m9 0h1m10 0h1m9 0h1m9 0h1m9 0h1m10 0h1m9 0h1m9 0h1m9 0h1m10 0h1m9 0h1m9 0h1m9 0h1m10 0h1m9 0h1m9 0h1m9 0h1m10 0h1m9 0h1m9 0h1m9 0h1m10 0h1m9 0h1m9 0h1m9 0h1m10 0h1m9 0h1m9 0h1m9 0h1m10 0h1m9 0h1m9 0h1m9 0h1m10 0h1m9 0h1m9 0h1m9 0h1m10 0h1m9 0h1m9 0h1m9 0h1m10 0h1m9 0h1m9 0h1m9 0h1m10 0h1m9 0h1m9 0h1M95 312.5h1m9 0h1m9 0h1m10 0h1m9 0h1m9 0h1m9 0h1m10 0h1m9 0h1m9 0h1m9 0h1m10 0h1m9 0h1m9 0h1m9 0h1m10 0h1m9 0h1m9 0h1m9 0h1m10 0h1m9 0h1m9 0h1m9 0h1m10 0h1m9 0h1m9 0h1m9 0h1m10 0h1m9 0h1m9 0h1m9 0h1m10 0h1m9 0h1m9 0h1m9 0h1m10 0h1m9 0h1m9 0h1m9 0h1m10 0h1m9 0h1m9 0h1m9 0h1m10 0h1m9 0h1m9 0h1m9 0h1m10 0h1m9 0h1m9 0h1m9 0h1m10 0h1m9 0h1m9 0h1m9 0h1m10 0h1m9 0h1m9 0h1m9 0h1m10 0h1m9 0h1m9 0h1m9 0h1m10 0h1m9 0h1m9 0h1m9 0h1m10 0h1m9 0h1m9 0h1m9 0h1m10 0h1m9 0h1m9 0h1m9 0h1m10 0h1m9 0h1m9 0h1m9 0h1m10 0h1m9 0h1m9 0h1m9 0h1m10 0h1m9 0h1m9 0h1m9 0h1m10 0h1m9 0h1m9 0h1m9 0h1m10 0h1m9 0h1m9 0h1m9 0h1m10 0h1m9 0h1m9 0h1m9 0h1m10 0h1m9 0h1m9 0h1M95 301.5h1m9 0h1m9 0h1m10 0h1m9 0h1m9 0h1m9 0h1m10 0h1m9 0h1m9 0h1m9 0h1m10 0h1m9 0h1m9 0h1m9 0h1m10 0h1m9 0h1m9 0h1m9 0h1m10 0h1m9 0h1m9 0h1m9 0h1m10 0h1m9 0h1m9 0h1m9 0h1m10 0h1m9 0h1m9 0h1m9 0h1m10 0h1m9 0h1m9 0h1m9 0h1m10 0h1m9 0h1m9 0h1m9 0h1m10 0h1m9 0h1m9 0h1m9 0h1m10 0h1m9 0h1m9 0h1m9 0h1m10 0h1m9 0h1m9 0h1m9 0h1m10 0h1m9 0h1m9 0h1m9 0h1m10 0h1m9 0h1m9 0h1m9 0h1m10 0h1m9 0h1m9 0h1m9 0h1m10 0h1m9 0h1m9 0h1m9 0h1m10 0h1m9 0h1m9 0h1m9 0h1m10 0h1m9 0h1m9 0h1m9 0h1m10 0h1m9 0h1m9 0h1m9 0h1m10 0h1m9 0h1m9 0h1m9 0h1m10 0h1m9 0h1m9 0h1m9 0h1m10 0h1m9 0h1m9 0h1m9 0h1m10 0h1m9 0h1m9 0h1m9 0h1m10 0h1m9 0h1m9 0h1m9 0h1m10 0h1m9 0h1m9 0h1M95 291.5h1m9 0h1m9 0h1m10 0h1m9 0h1m9 0h1m9 0h1m10 0h1m9 0h1m9 0h1m9 0h1m10 0h1m9 0h1m9 0h1m9 0h1m10 0h1m9 0h1m9 0h1m9 0h1m10 0h1m9 0h1m9 0h1m9 0h1m10 0h1m9 0h1m9 0h1m9 0h1m10 0h1m9 0h1m9 0h1m9 0h1m10 0h1m9 0h1m9 0h1m9 0h1m10 0h1m9 0h1m9 0h1m9 0h1m10 0h1m9 0h1m9 0h1m9 0h1m10 0h1m9 0h1m9 0h1m9 0h1m10 0h1m9 0h1m9 0h1m9 0h1m10 0h1m9 0h1m9 0h1m9 0h1m10 0h1m9 0h1m9 0h1m9 0h1m10 0h1m9 0h1m9 0h1m9 0h1m10 0h1m9 0h1m9 0h1m9 0h1m10 0h1m9 0h1m9 0h1m9 0h1m10 0h1m9 0h1m9 0h1m9 0h1m10 0h1m9 0h1m9 0h1m9 0h1m10 0h1m9 0h1m9 0h1m9 0h1m10 0h1m9 0h1m9 0h1m9 0h1m10 0h1m9 0h1m9 0h1m9 0h1m10 0h1m9 0h1m9 0h1m9 0h1m10 0h1m9 0h1m9 0h1m9 0h1m10 0h1m9 0h1m9 0h1M95 281.5h1m9 0h1m9 0h1m10 0h1m9 0h1m9 0h1m9 0h1m10 0h1m9 0h1m9 0h1m9 0h1m10 0h1m9 0h1m9 0h1m9 0h1m10 0h1m9 0h1m9 0h1m9 0h1m10 0h1m9 0h1m9 0h1m9 0h1m10 0h1m9 0h1m9 0h1m9 0h1m10 0h1m9 0h1m9 0h1m9 0h1m10 0h1m9 0h1m9 0h1m9 0h1m10 0h1m9 0h1m9 0h1m9 0h1m10 0h1m9 0h1m9 0h1m9 0h1m10 0h1m9 0h1m9 0h1m9 0h1m10 0h1m9 0h1m9 0h1m9 0h1m10 0h1m9 0h1m9 0h1m9 0h1m10 0h1m9 0h1m9 0h1m9 0h1m10 0h1m9 0h1m9 0h1m9 0h1m10 0h1m9 0h1m9 0h1m9 0h1m10 0h1m9 0h1m9 0h1m9 0h1m10 0h1m9 0h1m9 0h1m9 0h1m10 0h1m9 0h1m9 0h1m9 0h1m10 0h1m9 0h1m9 0h1m9 0h1m10 0h1m9 0h1m9 0h1m9 0h1m10 0h1m9 0h1m9 0h1m9 0h1m10 0h1m9 0h1m9 0h1m9 0h1m10 0h1m9 0h1m9 0h1m9 0h1m10 0h1m9 0h1m9 0h1M95 271.5h1m9 0h1m9 0h1m10 0h1m9 0h1m9 0h1m9 0h1m10 0h1m9 0h1m9 0h1m9 0h1m10 0h1m9 0h1m9 0h1m9 0h1m10 0h1m9 0h1m9 0h1m9 0h1m10 0h1m9 0h1m9 0h1m9 0h1m10 0h1m9 0h1m9 0h1m9 0h1m10 0h1m9 0h1m9 0h1m9 0h1m10 0h1m9 0h1m9 0h1m9 0h1m10 0h1m9 0h1m9 0h1m9 0h1m10 0h1m9 0h1m9 0h1m9 0h1m10 0h1m9 0h1m9 0h1m9 0h1m10 0h1m9 0h1m9 0h1m9 0h1m10 0h1m9 0h1m9 0h1m9 0h1m10 0h1m9 0h1m9 0h1m9 0h1m10 0h1m9 0h1m9 0h1m9 0h1m10 0h1m9 0h1m9 0h1m9 0h1m10 0h1m9 0h1m9 0h1m9 0h1m10 0h1m9 0h1m9 0h1m9 0h1m10 0h1m9 0h1m9 0h1m9 0h1m10 0h1m9 0h1m9 0h1m9 0h1m10 0h1m9 0h1m9 0h1m9 0h1m10 0h1m9 0h1m9 0h1m9 0h1m10 0h1m9 0h1m9 0h1m9 0h1m10 0h1m9 0h1m9 0h1m9 0h1m10 0h1m9 0h1m9 0h1M95 260.5h1m9 0h1m9 0h1m10 0h1m9 0h1m9 0h1m9 0h1m10 0h1m9 0h1m9 0h1m9 0h1m10 0h1m9 0h1m9 0h1m9 0h1m10 0h1m9 0h1m9 0h1m9 0h1m10 0h1m9 0h1m9 0h1m9 0h1m10 0h1m9 0h1m9 0h1m9 0h1m10 0h1m9 0h1m9 0h1m9 0h1m10 0h1m9 0h1m9 0h1m9 0h1m10 0h1m9 0h1m9 0h1m9 0h1m10 0h1m9 0h1m9 0h1m9 0h1m10 0h1m9 0h1m9 0h1m9 0h1m10 0h1m9 0h1m9 0h1m9 0h1m10 0h1m9 0h1m9 0h1m9 0h1m10 0h1m9 0h1m9 0h1m9 0h1m10 0h1m9 0h1m9 0h1m9 0h1m10 0h1m9 0h1m9 0h1m9 0h1m10 0h1m9 0h1m9 0h1m9 0h1m10 0h1m9 0h1m9 0h1m9 0h1m10 0h1m9 0h1m9 0h1m9 0h1m10 0h1m9 0h1m9 0h1m9 0h1m10 0h1m9 0h1m9 0h1m9 0h1m10 0h1m9 0h1m9 0h1m9 0h1m10 0h1m9 0h1m9 0h1m9 0h1m10 0h1m9 0h1m9 0h1m9 0h1m10 0h1m9 0h1m9 0h1M95 250.5h1m9 0h1m9 0h1m10 0h1m9 0h1m9 0h1m9 0h1m10 0h1m9 0h1m9 0h1m9 0h1m10 0h1m9 0h1m9 0h1m9 0h1m10 0h1m9 0h1m9 0h1m9 0h1m10 0h1m9 0h1m9 0h1m9 0h1m10 0h1m9 0h1m9 0h1m9 0h1m10 0h1m9 0h1m9 0h1m9 0h1m10 0h1m9 0h1m9 0h1m9 0h1m10 0h1m9 0h1m9 0h1m9 0h1m10 0h1m9 0h1m9 0h1m9 0h1m10 0h1m9 0h1m9 0h1m9 0h1m10 0h1m9 0h1m9 0h1m9 0h1m10 0h1m9 0h1m9 0h1m9 0h1m10 0h1m9 0h1m9 0h1m9 0h1m10 0h1m9 0h1m9 0h1m9 0h1m10 0h1m9 0h1m9 0h1m9 0h1m10 0h1m9 0h1m9 0h1m9 0h1m10 0h1m9 0h1m9 0h1m9 0h1m10 0h1m9 0h1m9 0h1m9 0h1m10 0h1m9 0h1m9 0h1m9 0h1m10 0h1m9 0h1m9 0h1m9 0h1m10 0h1m9 0h1m9 0h1m9 0h1m10 0h1m9 0h1m9 0h1m9 0h1m10 0h1m9 0h1m9 0h1m9 0h1m10 0h1m9 0h1m9 0h1M95 240.5h1m9 0h1m9 0h1m10 0h1m9 0h1m9 0h1m9 0h1m10 0h1m9 0h1m9 0h1m9 0h1m10 0h1m9 0h1m9 0h1m9 0h1m10 0h1m9 0h1m9 0h1m9 0h1m10 0h1m9 0h1m9 0h1m9 0h1m10 0h1m9 0h1m9 0h1m9 0h1m10 0h1m9 0h1m9 0h1m9 0h1m10 0h1m9 0h1m9 0h1m9 0h1m10 0h1m9 0h1m9 0h1m9 0h1m10 0h1m9 0h1m9 0h1m9 0h1m10 0h1m9 0h1m9 0h1m9 0h1m10 0h1m9 0h1m9 0h1m9 0h1m10 0h1m9 0h1m9 0h1m9 0h1m10 0h1m9 0h1m9 0h1m9 0h1m10 0h1m9 0h1m9 0h1m9 0h1m10 0h1m9 0h1m9 0h1m9 0h1m10 0h1m9 0h1m9 0h1m9 0h1m10 0h1m9 0h1m9 0h1m9 0h1m10 0h1m9 0h1m9 0h1m9 0h1m10 0h1m9 0h1m9 0h1m9 0h1m10 0h1m9 0h1m9 0h1m9 0h1m10 0h1m9 0h1m9 0h1m9 0h1m10 0h1m9 0h1m9 0h1m9 0h1m10 0h1m9 0h1m9 0h1m9 0h1m10 0h1m9 0h1m9 0h1M95 230.5h1m9 0h1m9 0h1m10 0h1m9 0h1m9 0h1m9 0h1m10 0h1m9 0h1m9 0h1m9 0h1m10 0h1m9 0h1m9 0h1m9 0h1m10 0h1m9 0h1m9 0h1m9 0h1m10 0h1m9 0h1m9 0h1m9 0h1m10 0h1m9 0h1m9 0h1m9 0h1m10 0h1m9 0h1m9 0h1m9 0h1m10 0h1m9 0h1m9 0h1m9 0h1m10 0h1m9 0h1m9 0h1m9 0h1m10 0h1m9 0h1m9 0h1m9 0h1m10 0h1m9 0h1m9 0h1m9 0h1m10 0h1m9 0h1m9 0h1m9 0h1m10 0h1m9 0h1m9 0h1m9 0h1m10 0h1m9 0h1m9 0h1m9 0h1m10 0h1m9 0h1m9 0h1m9 0h1m10 0h1m9 0h1m9 0h1m9 0h1m10 0h1m9 0h1m9 0h1m9 0h1m10 0h1m9 0h1m9 0h1m9 0h1m10 0h1m9 0h1m9 0h1m9 0h1m10 0h1m9 0h1m9 0h1m9 0h1m10 0h1m9 0h1m9 0h1m9 0h1m10 0h1m9 0h1m9 0h1m9 0h1m10 0h1m9 0h1m9 0h1m9 0h1m10 0h1m9 0h1m9 0h1m9 0h1m10 0h1m9 0h1m9 0h1M95 219.5h1m9 0h1m9 0h1m10 0h1m9 0h1m9 0h1m9 0h1m10 0h1m9 0h1m9 0h1m9 0h1m10 0h1m9 0h1m9 0h1m9 0h1m10 0h1m9 0h1m9 0h1m9 0h1m10 0h1m9 0h1m9 0h1m9 0h1m10 0h1m9 0h1m9 0h1m9 0h1m10 0h1m9 0h1m9 0h1m9 0h1m10 0h1m9 0h1m9 0h1m9 0h1m10 0h1m9 0h1m9 0h1m9 0h1m10 0h1m9 0h1m9 0h1m9 0h1m10 0h1m9 0h1m9 0h1m9 0h1m10 0h1m9 0h1m9 0h1m9 0h1m10 0h1m9 0h1m9 0h1m9 0h1m10 0h1m9 0h1m9 0h1m9 0h1m10 0h1m9 0h1m9 0h1m9 0h1m10 0h1m9 0h1m9 0h1m9 0h1m10 0h1m9 0h1m9 0h1m9 0h1m10 0h1m9 0h1m9 0h1m9 0h1m10 0h1m9 0h1m9 0h1m9 0h1m10 0h1m9 0h1m9 0h1m9 0h1m10 0h1m9 0h1m9 0h1m9 0h1m10 0h1m9 0h1m9 0h1m9 0h1m10 0h1m9 0h1m9 0h1m9 0h1m10 0h1m9 0h1m9 0h1m9 0h1m10 0h1m9 0h1m9 0h1M95 209.5h1m9 0h1m9 0h1m10 0h1m9 0h1m9 0h1m9 0h1m10 0h1m9 0h1m9 0h1m9 0h1m10 0h1m9 0h1m9 0h1m9 0h1m10 0h1m9 0h1m9 0h1m9 0h1m10 0h1m9 0h1m9 0h1m9 0h1m10 0h1m9 0h1m9 0h1m9 0h1m10 0h1m9 0h1m9 0h1m9 0h1m10 0h1m9 0h1m9 0h1m9 0h1m10 0h1m9 0h1m9 0h1m9 0h1m10 0h1m9 0h1m9 0h1m9 0h1m10 0h1m9 0h1m9 0h1m9 0h1m10 0h1m9 0h1m9 0h1m9 0h1m10 0h1m9 0h1m9 0h1m9 0h1m10 0h1m9 0h1m9 0h1m9 0h1m10 0h1m9 0h1m9 0h1m9 0h1m10 0h1m9 0h1m9 0h1m9 0h1m10 0h1m9 0h1m9 0h1m9 0h1m10 0h1m9 0h1m9 0h1m9 0h1m10 0h1m9 0h1m9 0h1m9 0h1m10 0h1m9 0h1m9 0h1m9 0h1m10 0h1m9 0h1m9 0h1m9 0h1m10 0h1m9 0h1m9 0h1m9 0h1m10 0h1m9 0h1m9 0h1m9 0h1m10 0h1m9 0h1m9 0h1m9 0h1m10 0h1m9 0h1m9 0h1M95 199.5h1m9 0h1m9 0h1m10 0h1m9 0h1m9 0h1m9 0h1m10 0h1m9 0h1m9 0h1m9 0h1m10 0h1m9 0h1m9 0h1m9 0h1m10 0h1m9 0h1m9 0h1m9 0h1m10 0h1m9 0h1m9 0h1m9 0h1m10 0h1m9 0h1m9 0h1m9 0h1m10 0h1m9 0h1m9 0h1m9 0h1m10 0h1m9 0h1m9 0h1m9 0h1m10 0h1m9 0h1m9 0h1m9 0h1m10 0h1m9 0h1m9 0h1m9 0h1m10 0h1m9 0h1m9 0h1m9 0h1m10 0h1m9 0h1m9 0h1m9 0h1m10 0h1m9 0h1m9 0h1m9 0h1m10 0h1m9 0h1m9 0h1m9 0h1m10 0h1m9 0h1m9 0h1m9 0h1m10 0h1m9 0h1m9 0h1m9 0h1m10 0h1m9 0h1m9 0h1m9 0h1m10 0h1m9 0h1m9 0h1m9 0h1m10 0h1m9 0h1m9 0h1m9 0h1m10 0h1m9 0h1m9 0h1m9 0h1m10 0h1m9 0h1m9 0h1m9 0h1m10 0h1m9 0h1m9 0h1m9 0h1m10 0h1m9 0h1m9 0h1m9 0h1m10 0h1m9 0h1m9 0h1m9 0h1m10 0h1m9 0h1m9 0h1M95 189.5h1m9 0h1m9 0h1m10 0h1m9 0h1m9 0h1m9 0h1m10 0h1m9 0h1m9 0h1m9 0h1m10 0h1m9 0h1m9 0h1m9 0h1m10 0h1m9 0h1m9 0h1m9 0h1m10 0h1m9 0h1m9 0h1m9 0h1m10 0h1m9 0h1m9 0h1m9 0h1m10 0h1m9 0h1m9 0h1m9 0h1m10 0h1m9 0h1m9 0h1m9 0h1m10 0h1m9 0h1m9 0h1m9 0h1m10 0h1m9 0h1m9 0h1m9 0h1m10 0h1m9 0h1m9 0h1m9 0h1m10 0h1m9 0h1m9 0h1m9 0h1m10 0h1m9 0h1m9 0h1m9 0h1m10 0h1m9 0h1m9 0h1m9 0h1m10 0h1m9 0h1m9 0h1m9 0h1m10 0h1m9 0h1m9 0h1m9 0h1m10 0h1m9 0h1m9 0h1m9 0h1m10 0h1m9 0h1m9 0h1m9 0h1m10 0h1m9 0h1m9 0h1m9 0h1m10 0h1m9 0h1m9 0h1m9 0h1m10 0h1m9 0h1m9 0h1m9 0h1m10 0h1m9 0h1m9 0h1m9 0h1m10 0h1m9 0h1m9 0h1m9 0h1m10 0h1m9 0h1m9 0h1m9 0h1m10 0h1m9 0h1m9 0h1M95 178.5h1m9 0h1m9 0h1m10 0h1m9 0h1m9 0h1m9 0h1m10 0h1m9 0h1m9 0h1m9 0h1m10 0h1m9 0h1m9 0h1m9 0h1m10 0h1m9 0h1m9 0h1m9 0h1m10 0h1m9 0h1m9 0h1m9 0h1m10 0h1m9 0h1m9 0h1m9 0h1m10 0h1m9 0h1m9 0h1m9 0h1m10 0h1m9 0h1m9 0h1m9 0h1m10 0h1m9 0h1m9 0h1m9 0h1m10 0h1m9 0h1m9 0h1m9 0h1m10 0h1m9 0h1m9 0h1m9 0h1m10 0h1m9 0h1m9 0h1m9 0h1m10 0h1m9 0h1m9 0h1m9 0h1m10 0h1m9 0h1m9 0h1m9 0h1m10 0h1m9 0h1m9 0h1m9 0h1m10 0h1m9 0h1m9 0h1m9 0h1m10 0h1m9 0h1m9 0h1m9 0h1m10 0h1m9 0h1m9 0h1m9 0h1m10 0h1m9 0h1m9 0h1m9 0h1m10 0h1m9 0h1m9 0h1m9 0h1m10 0h1m9 0h1m9 0h1m9 0h1m10 0h1m9 0h1m9 0h1m9 0h1m10 0h1m9 0h1m9 0h1m9 0h1m10 0h1m9 0h1m9 0h1m9 0h1m10 0h1m9 0h1m9 0h1M95 168.5h1m9 0h1m9 0h1m10 0h1m9 0h1m9 0h1m9 0h1m10 0h1m9 0h1m9 0h1m9 0h1m10 0h1m9 0h1m9 0h1m9 0h1m10 0h1m9 0h1m9 0h1m9 0h1m10 0h1m9 0h1m9 0h1m9 0h1m10 0h1m9 0h1m9 0h1m9 0h1m10 0h1m9 0h1m9 0h1m9 0h1m10 0h1m9 0h1m9 0h1m9 0h1m10 0h1m9 0h1m9 0h1m9 0h1m10 0h1m9 0h1m9 0h1m9 0h1m10 0h1m9 0h1m9 0h1m9 0h1m10 0h1m9 0h1m9 0h1m9 0h1m10 0h1m9 0h1m9 0h1m9 0h1m10 0h1m9 0h1m9 0h1m9 0h1m10 0h1m9 0h1m9 0h1m9 0h1m10 0h1m9 0h1m9 0h1m9 0h1m10 0h1m9 0h1m9 0h1m9 0h1m10 0h1m9 0h1m9 0h1m9 0h1m10 0h1m9 0h1m9 0h1m9 0h1m10 0h1m9 0h1m9 0h1m9 0h1m10 0h1m9 0h1m9 0h1m9 0h1m10 0h1m9 0h1m9 0h1m9 0h1m10 0h1m9 0h1m9 0h1m9 0h1m10 0h1m9 0h1m9 0h1m9 0h1m10 0h1m9 0h1m9 0h1M95 158.5h1m9 0h1m9 0h1m10 0h1m9 0h1m9 0h1m9 0h1m10 0h1m9 0h1m9 0h1m9 0h1m10 0h1m9 0h1m9 0h1m9 0h1m10 0h1m9 0h1m9 0h1m9 0h1m10 0h1m9 0h1m9 0h1m9 0h1m10 0h1m9 0h1m9 0h1m9 0h1m10 0h1m9 0h1m9 0h1m9 0h1m10 0h1m9 0h1m9 0h1m9 0h1m10 0h1m9 0h1m9 0h1m9 0h1m10 0h1m9 0h1m9 0h1m9 0h1m10 0h1m9 0h1m9 0h1m9 0h1m10 0h1m9 0h1m9 0h1m9 0h1m10 0h1m9 0h1m9 0h1m9 0h1m10 0h1m9 0h1m9 0h1m9 0h1m10 0h1m9 0h1m9 0h1m9 0h1m10 0h1m9 0h1m9 0h1m9 0h1m10 0h1m9 0h1m9 0h1m9 0h1m10 0h1m9 0h1m9 0h1m9 0h1m10 0h1m9 0h1m9 0h1m9 0h1m10 0h1m9 0h1m9 0h1m9 0h1m10 0h1m9 0h1m9 0h1m9 0h1m10 0h1m9 0h1m9 0h1m9 0h1m10 0h1m9 0h1m9 0h1m9 0h1m10 0h1m9 0h1m9 0h1m9 0h1m10 0h1m9 0h1m9 0h1" stroke="#4e4e4e" stroke-width="1" fill="none"/>
<rect x="146.45" y="270.8" width="922.2" height="358.7" rx="20.5" fill="none" stroke="#fff" stroke-width="2.5"/>
<line x1="126" y1="629.5" x2="166.5" y2="629.5" stroke="#c00000" stroke-width="1"/>
<line x1="146.5" y1="609" x2="146.5" y2="650" stroke="#c00000" stroke-width="1"/>
<circle cx="146.5" cy="629.5" r="5.2" fill="none" stroke="#c00000" stroke-width="1"/>
<rect x="197" y="326.8" width="195.4" height="72" rx="36" fill="none" stroke="#a8a8a8" stroke-width="1.6" stroke-dasharray="9.5 2.5 1.5 2.5"/>
<line x1="187.0" y1="362.9" x2="403.0" y2="362.9" stroke="#d40000" stroke-width="2" stroke-dasharray="17.4 6.2 1.8 6.5" stroke-dashoffset="12.20"/>
<line x1="295.1" y1="311.0" x2="295.1" y2="415.0" stroke="#d40000" stroke-width="2" stroke-dasharray="17.4 6.2 1.8 6.5" stroke-dashoffset="4.40"/>
<circle cx="233.1" cy="362.9" r="7.6" fill="none" stroke="#fff" stroke-width="2.5"/>
<circle cx="356.3" cy="362.9" r="7.6" fill="none" stroke="#fff" stroke-width="2.5"/>
<path d="M253,337 L337,337 Q345.5,337 345,345.5 L341.5,380 Q340.5,388.4 332,388.4 L258,388.4 Q249.5,388.4 248.5,380 L245,345.5 Q244.5,337 253,337 Z" fill="none" stroke="#fff" stroke-width="2.5"/>
<line x1="417.0" y1="362.9" x2="526.0" y2="362.9" stroke="#d40000" stroke-width="2" stroke-dasharray="17.4 6.2 1.8 6.5" stroke-dashoffset="1.90"/>
<line x1="469.0" y1="311.0" x2="469.0" y2="415.0" stroke="#d40000" stroke-width="2" stroke-dasharray="17.4 6.2 1.8 6.5" stroke-dashoffset="4.40"/>
<circle cx="469" cy="362.9" r="38.9" fill="none" stroke="#fff" stroke-width="2.5"/>
<circle cx="669.1" cy="332.2" r="7.1" fill="none" stroke="#fff" stroke-width="2.4"/>
<circle cx="699.9" cy="332.2" r="7.1" fill="none" stroke="#fff" stroke-width="2.4"/>
<circle cx="730.6" cy="332.2" r="7.1" fill="none" stroke="#fff" stroke-width="2.4"/>
<circle cx="761.4" cy="332.2" r="7.1" fill="none" stroke="#fff" stroke-width="2.4"/>
<circle cx="792.1" cy="332.2" r="7.1" fill="none" stroke="#fff" stroke-width="2.4"/>
<circle cx="822.9" cy="332.2" r="7.1" fill="none" stroke="#fff" stroke-width="2.4"/>
<circle cx="853.6" cy="332.2" r="7.1" fill="none" stroke="#fff" stroke-width="2.4"/>
<circle cx="884.4" cy="332.2" r="7.1" fill="none" stroke="#fff" stroke-width="2.4"/>
<circle cx="915.1" cy="332.2" r="7.1" fill="none" stroke="#fff" stroke-width="2.4"/>
<circle cx="945.9" cy="332.2" r="7.1" fill="none" stroke="#fff" stroke-width="2.4"/>
<circle cx="976.6" cy="332.2" r="7.1" fill="none" stroke="#fff" stroke-width="2.4"/>
<circle cx="1007.4" cy="332.2" r="7.1" fill="none" stroke="#fff" stroke-width="2.4"/>
<circle cx="684.5" cy="352.7" r="7.1" fill="none" stroke="#fff" stroke-width="2.4"/>
<circle cx="715.3" cy="352.7" r="7.1" fill="none" stroke="#fff" stroke-width="2.4"/>
<circle cx="746.0" cy="352.7" r="7.1" fill="none" stroke="#fff" stroke-width="2.4"/>
<circle cx="776.8" cy="352.7" r="7.1" fill="none" stroke="#fff" stroke-width="2.4"/>
<circle cx="807.5" cy="352.7" r="7.1" fill="none" stroke="#fff" stroke-width="2.4"/>
<circle cx="838.3" cy="352.7" r="7.1" fill="none" stroke="#fff" stroke-width="2.4"/>
<circle cx="869.0" cy="352.7" r="7.1" fill="none" stroke="#fff" stroke-width="2.4"/>
<circle cx="899.8" cy="352.7" r="7.1" fill="none" stroke="#fff" stroke-width="2.4"/>
<circle cx="930.5" cy="352.7" r="7.1" fill="none" stroke="#fff" stroke-width="2.4"/>
<circle cx="961.3" cy="352.7" r="7.1" fill="none" stroke="#fff" stroke-width="2.4"/>
<circle cx="992.0" cy="352.7" r="7.1" fill="none" stroke="#fff" stroke-width="2.4"/>
<circle cx="669.1" cy="373.2" r="7.1" fill="none" stroke="#fff" stroke-width="2.4"/>
<circle cx="699.9" cy="373.2" r="7.1" fill="none" stroke="#fff" stroke-width="2.4"/>
<circle cx="730.6" cy="373.2" r="7.1" fill="none" stroke="#fff" stroke-width="2.4"/>
<circle cx="761.4" cy="373.2" r="7.1" fill="none" stroke="#fff" stroke-width="2.4"/>
<circle cx="792.1" cy="373.2" r="7.1" fill="none" stroke="#fff" stroke-width="2.4"/>
<circle cx="822.9" cy="373.2" r="7.1" fill="none" stroke="#fff" stroke-width="2.4"/>
<circle cx="853.6" cy="373.2" r="7.1" fill="none" stroke="#fff" stroke-width="2.4"/>
<circle cx="884.4" cy="373.2" r="7.1" fill="none" stroke="#fff" stroke-width="2.4"/>
<circle cx="915.1" cy="373.2" r="7.1" fill="none" stroke="#fff" stroke-width="2.4"/>
<circle cx="945.9" cy="373.2" r="7.1" fill="none" stroke="#fff" stroke-width="2.4"/>
<circle cx="976.6" cy="373.2" r="7.1" fill="none" stroke="#fff" stroke-width="2.4"/>
<circle cx="1007.4" cy="373.2" r="7.1" fill="none" stroke="#fff" stroke-width="2.4"/>
<circle cx="684.5" cy="393.7" r="7.1" fill="none" stroke="#fff" stroke-width="2.4"/>
<circle cx="715.3" cy="393.7" r="7.1" fill="none" stroke="#fff" stroke-width="2.4"/>
<circle cx="746.0" cy="393.7" r="7.1" fill="none" stroke="#fff" stroke-width="2.4"/>
<circle cx="776.8" cy="393.7" r="7.1" fill="none" stroke="#fff" stroke-width="2.4"/>
<circle cx="807.5" cy="393.7" r="7.1" fill="none" stroke="#fff" stroke-width="2.4"/>
<circle cx="838.3" cy="393.7" r="7.1" fill="none" stroke="#fff" stroke-width="2.4"/>
<circle cx="869.0" cy="393.7" r="7.1" fill="none" stroke="#fff" stroke-width="2.4"/>
<circle cx="899.8" cy="393.7" r="7.1" fill="none" stroke="#fff" stroke-width="2.4"/>
<circle cx="930.5" cy="393.7" r="7.1" fill="none" stroke="#fff" stroke-width="2.4"/>
<circle cx="961.3" cy="393.7" r="7.1" fill="none" stroke="#fff" stroke-width="2.4"/>
<circle cx="992.0" cy="393.7" r="7.1" fill="none" stroke="#fff" stroke-width="2.4"/>
<circle cx="669.1" cy="414.2" r="7.1" fill="none" stroke="#fff" stroke-width="2.4"/>
<circle cx="699.9" cy="414.2" r="7.1" fill="none" stroke="#fff" stroke-width="2.4"/>
<circle cx="730.6" cy="414.2" r="7.1" fill="none" stroke="#fff" stroke-width="2.4"/>
<circle cx="761.4" cy="414.2" r="7.1" fill="none" stroke="#fff" stroke-width="2.4"/>
<circle cx="792.1" cy="414.2" r="7.1" fill="none" stroke="#fff" stroke-width="2.4"/>
<circle cx="822.9" cy="414.2" r="7.1" fill="none" stroke="#fff" stroke-width="2.4"/>
<circle cx="853.6" cy="414.2" r="7.1" fill="none" stroke="#fff" stroke-width="2.4"/>
<circle cx="884.4" cy="414.2" r="7.1" fill="none" stroke="#fff" stroke-width="2.4"/>
<circle cx="915.1" cy="414.2" r="7.1" fill="none" stroke="#fff" stroke-width="2.4"/>
<circle cx="945.9" cy="414.2" r="7.1" fill="none" stroke="#fff" stroke-width="2.4"/>
<circle cx="976.6" cy="414.2" r="7.1" fill="none" stroke="#fff" stroke-width="2.4"/>
<circle cx="1007.4" cy="414.2" r="7.1" fill="none" stroke="#fff" stroke-width="2.4"/>
<circle cx="684.5" cy="434.7" r="7.1" fill="none" stroke="#fff" stroke-width="2.4"/>
<circle cx="715.3" cy="434.7" r="7.1" fill="none" stroke="#fff" stroke-width="2.4"/>
<circle cx="746.0" cy="434.7" r="7.1" fill="none" stroke="#fff" stroke-width="2.4"/>
<circle cx="776.8" cy="434.7" r="7.1" fill="none" stroke="#fff" stroke-width="2.4"/>
<circle cx="807.5" cy="434.7" r="7.1" fill="none" stroke="#fff" stroke-width="2.4"/>
<circle cx="838.3" cy="434.7" r="7.1" fill="none" stroke="#fff" stroke-width="2.4"/>
<circle cx="869.0" cy="434.7" r="7.1" fill="none" stroke="#fff" stroke-width="2.4"/>
<circle cx="899.8" cy="434.7" r="7.1" fill="none" stroke="#fff" stroke-width="2.4"/>
<circle cx="930.5" cy="434.7" r="7.1" fill="none" stroke="#fff" stroke-width="2.4"/>
<circle cx="961.3" cy="434.7" r="7.1" fill="none" stroke="#fff" stroke-width="2.4"/>
<circle cx="992.0" cy="434.7" r="7.1" fill="none" stroke="#fff" stroke-width="2.4"/>
<circle cx="669.1" cy="455.2" r="7.1" fill="none" stroke="#fff" stroke-width="2.4"/>
<circle cx="699.9" cy="455.2" r="7.1" fill="none" stroke="#fff" stroke-width="2.4"/>
<circle cx="730.6" cy="455.2" r="7.1" fill="none" stroke="#fff" stroke-width="2.4"/>
<circle cx="761.4" cy="455.2" r="7.1" fill="none" stroke="#fff" stroke-width="2.4"/>
<circle cx="792.1" cy="455.2" r="7.1" fill="none" stroke="#fff" stroke-width="2.4"/>
<circle cx="822.9" cy="455.2" r="7.1" fill="none" stroke="#fff" stroke-width="2.4"/>
<circle cx="684.5" cy="475.7" r="7.1" fill="none" stroke="#fff" stroke-width="2.4"/>
<circle cx="715.3" cy="475.7" r="7.1" fill="none" stroke="#fff" stroke-width="2.4"/>
<circle cx="746.0" cy="475.7" r="7.1" fill="none" stroke="#fff" stroke-width="2.4"/>
<circle cx="776.8" cy="475.7" r="7.1" fill="none" stroke="#fff" stroke-width="2.4"/>
<circle cx="807.5" cy="475.7" r="7.1" fill="none" stroke="#fff" stroke-width="2.4"/>
<circle cx="669.1" cy="496.2" r="7.1" fill="none" stroke="#fff" stroke-width="2.4"/>
<circle cx="699.9" cy="496.2" r="7.1" fill="none" stroke="#fff" stroke-width="2.4"/>
<circle cx="730.6" cy="496.2" r="7.1" fill="none" stroke="#fff" stroke-width="2.4"/>
<circle cx="761.4" cy="496.2" r="7.1" fill="none" stroke="#fff" stroke-width="2.4"/>
<circle cx="792.1" cy="496.2" r="7.1" fill="none" stroke="#fff" stroke-width="2.4"/>
<circle cx="822.9" cy="496.2" r="7.1" fill="none" stroke="#fff" stroke-width="2.4"/>
<circle cx="684.5" cy="516.7" r="7.1" fill="none" stroke="#fff" stroke-width="2.4"/>
<circle cx="715.3" cy="516.7" r="7.1" fill="none" stroke="#fff" stroke-width="2.4"/>
<circle cx="746.0" cy="516.7" r="7.1" fill="none" stroke="#fff" stroke-width="2.4"/>
<circle cx="776.8" cy="516.7" r="7.1" fill="none" stroke="#fff" stroke-width="2.4"/>
<circle cx="807.5" cy="516.7" r="7.1" fill="none" stroke="#fff" stroke-width="2.4"/>
<circle cx="669.1" cy="537.2" r="7.1" fill="none" stroke="#fff" stroke-width="2.4"/>
<circle cx="699.9" cy="537.2" r="7.1" fill="none" stroke="#fff" stroke-width="2.4"/>
<circle cx="730.6" cy="537.2" r="7.1" fill="none" stroke="#fff" stroke-width="2.4"/>
<circle cx="761.4" cy="537.2" r="7.1" fill="none" stroke="#fff" stroke-width="2.4"/>
<circle cx="792.1" cy="537.2" r="7.1" fill="none" stroke="#fff" stroke-width="2.4"/>
<circle cx="822.9" cy="537.2" r="7.1" fill="none" stroke="#fff" stroke-width="2.4"/>
<circle cx="684.5" cy="557.7" r="7.1" fill="none" stroke="#fff" stroke-width="2.4"/>
<circle cx="715.3" cy="557.7" r="7.1" fill="none" stroke="#fff" stroke-width="2.4"/>
<circle cx="746.0" cy="557.7" r="7.1" fill="none" stroke="#fff" stroke-width="2.4"/>
<circle cx="776.8" cy="557.7" r="7.1" fill="none" stroke="#fff" stroke-width="2.4"/>
<circle cx="807.5" cy="557.7" r="7.1" fill="none" stroke="#fff" stroke-width="2.4"/>
<circle cx="669.1" cy="578.2" r="7.1" fill="none" stroke="#fff" stroke-width="2.4"/>
<circle cx="699.9" cy="578.2" r="7.1" fill="none" stroke="#fff" stroke-width="2.4"/>
<circle cx="730.6" cy="578.2" r="7.1" fill="none" stroke="#fff" stroke-width="2.4"/>
<circle cx="761.4" cy="578.2" r="7.1" fill="none" stroke="#fff" stroke-width="2.4"/>
<circle cx="792.1" cy="578.2" r="7.1" fill="none" stroke="#fff" stroke-width="2.4"/>
<circle cx="822.9" cy="578.2" r="7.1" fill="none" stroke="#fff" stroke-width="2.4"/>
<line x1="845.0" y1="521.9" x2="1031.0" y2="521.9" stroke="#d40000" stroke-width="2" stroke-dasharray="17.4 6.2 1.8 6.5" stroke-dashoffset="27.20"/>
<line x1="938.1" y1="444.7" x2="938.1" y2="592.0" stroke="#d40000" stroke-width="2" stroke-dasharray="17.4 6.2 1.8 6.5" stroke-dashoffset="14.65"/>
<rect x="858.4" y="465.2" width="159.3" height="112.7" rx="21" fill="none" stroke="#fff" stroke-width="2.5"/>
<rect x="196.5" y="472.4" width="351.2" height="108.4" rx="54.2" fill="none" stroke="#a8a8a8" stroke-width="1.6" stroke-dasharray="9.5 2.5 1.5 2.5"/>
<line x1="176.6" y1="526.7" x2="567.0" y2="526.7" stroke="#d40000" stroke-width="2" stroke-dasharray="17.4 6.2 1.8 6.5" stroke-dashoffset="20.70"/>
<line x1="371.5" y1="454.7" x2="371.5" y2="599.0" stroke="#d40000" stroke-width="2" stroke-dasharray="17.4 6.2 1.8 6.5" stroke-dashoffset="16.15"/>
<circle cx="234.1" cy="526.7" r="16.9" fill="none" stroke="#fff" stroke-width="2.5"/>
<circle cx="508.9" cy="526.7" r="16.9" fill="none" stroke="#fff" stroke-width="2.5"/>
<path d="M288.5,494.5 L455.3,494.5 L455.3,543.8 L438.5,543.8 L425.5,559.4 L317.8,559.4 L304.6,543.8 L288.5,543.8 Z" fill="none" stroke="#fff" stroke-width="2.5"/>
<defs>
<radialGradient id="ring" cx="590.3" cy="350.8" r="40.5" gradientUnits="userSpaceOnUse">
<stop offset="0.74" stop-color="#000" stop-opacity="0"/>
<stop offset="0.79" stop-color="#2a333b"/>
<stop offset="0.86" stop-color="#56636f"/>
<stop offset="0.92" stop-color="#6f7e8b"/>
<stop offset="0.96" stop-color="#505c67"/>
<stop offset="1" stop-color="#000" stop-opacity="0"/>
</radialGradient>
<linearGradient id="hnd" x1="0" y1="0" x2="1" y2="1"><stop offset="0" stop-color="#1d8fbf"/><stop offset="1" stop-color="#3aa0c8"/></linearGradient>
</defs>
<circle cx="590.3" cy="350.8" r="40.5" fill="url(#ring)"/>
<line x1="545.3" y1="362.9" x2="608.3" y2="362.9" stroke="#d40000" stroke-width="2" stroke-dasharray="17.4 6.2 1.8 6.5" stroke-dashoffset="24.90"/>
<line x1="576.8" y1="331.4" x2="576.8" y2="394.4" stroke="#d40000" stroke-width="2" stroke-dasharray="17.4 6.2 1.8 6.5" stroke-dashoffset="24.90"/>
<circle cx="576.8" cy="362.9" r="17.8" fill="none" stroke="#7a3434" stroke-width="2"/>
<rect x="571.8" y="340.2" width="10" height="10" fill="url(#hnd)"/>
<rect x="553.4" y="357.9" width="10" height="10" fill="url(#hnd)"/>
<rect x="571.8" y="375.6" width="10" height="10" fill="url(#hnd)"/>
<circle cx="576.8" cy="362.9" r="5" fill="#0000b4"/>
<path d="M589.5,350 L589.5,374.5 L595,369.3 L599.6,379 L604,377 L599.3,367.4 L605.8,367.2 Z" fill="#fff" stroke="#fff" stroke-width="2.8" stroke-linejoin="round"/>
<path d="M589.5,350 L589.5,374.5 L595,369.3 L599.6,379 L604,377 L599.3,367.4 L605.8,367.2 Z" fill="#fff" stroke="#000" stroke-width="1.3" stroke-linejoin="round"/>

</svg><!-- toolbox -->
<div id="toolbox" class="a"></div>
<div class="a" style="left:7px;top:116px;width:57px;height:2px;background:linear-gradient(90deg,#a4a4a4 0 2px,transparent 2px 6px) 0 0/6px 2px repeat-x"></div>
<div class="tbtn" style="left:1.5px;top:122.0px;width:35.0px;height:34.5px"><div class="tri"></div></div>
<div class="tbtn" style="left:36.0px;top:122.0px;width:35.0px;height:34.5px"><div class="tri"></div></div>
<div class="tbtn" style="left:1.5px;top:157.0px;width:35.0px;height:34.5px"><div class="tri"></div></div>
<div class="tbtn" style="left:36.0px;top:157.0px;width:35.0px;height:34.5px"><div class="tri"></div></div>
<div class="tbtn" style="left:1.5px;top:192.0px;width:35.0px;height:34.5px"><div class="tri"></div></div>
<div class="tbtn" style="left:36.0px;top:192.0px;width:35.0px;height:34.5px"><div class="tri"></div></div>
<div class="tbtn" style="left:1.5px;top:227.0px;width:35.0px;height:34.5px"><div class="tri"></div></div>
<div class="tbtn" style="left:36.0px;top:227.0px;width:35.0px;height:34.5px"><div class="tri"></div></div>
<div class="tbtn" style="left:1.5px;top:262.0px;width:35.0px;height:34.5px"><div class="tri"></div></div>
<div class="tbtn" style="left:1.5px;top:305.0px;width:35.0px;height:34.5px"></div>
<div class="tbtn" style="left:36.0px;top:305.0px;width:35.0px;height:34.5px"><div class="tri"></div></div>
<div class="tbtn" style="left:1.5px;top:340.0px;width:35.0px;height:34.5px"></div>
<div class="tbtn" style="left:1.5px;top:383.5px;width:35.0px;height:34.5px"><div class="tri"></div></div>
<div class="tbtn" style="left:36.0px;top:383.5px;width:35.0px;height:34.5px"></div>
<div class="tbtn" style="left:1.5px;top:418.0px;width:35.0px;height:34.5px"></div>
<div class="tbtn" style="left:36.0px;top:418.0px;width:35.0px;height:34.5px"><div class="tri"></div></div>
<div class="tbtn" style="left:1.5px;top:461.5px;width:35.0px;height:34.5px"><div class="tri"></div></div>
<svg class="ico" style="left:0;top:108px" width="71" height="400" viewBox="0 108 71 400">
<path d="M8.5,131.2 h6 M11.5,128.2 v6 M22.3,140.2 h6 M25.3,137.2 v6 M9.3,146.2 h6 M12.3,143.2 v6" stroke="#111" stroke-width="1.2" fill="none"/>
<path d="M41.4,144.5 L65.1,134.3" stroke="#111" stroke-width="1.2" fill="none"/>
<path d="M8,183 Q9,165 28,163.4" stroke="#111" stroke-width="1.2" fill="none"/>
<circle cx="52.5" cy="173.8" r="10" stroke="#111" stroke-width="1.2" fill="none"/>
<ellipse cx="18.2" cy="209" rx="13" ry="6.2" transform="rotate(-47 18.2 209)" stroke="#111" stroke-width="1.2" fill="none"/>
<path d="M43,207 C41,197 45,195 50,204 C56,215 57,221 61,218 C65,214 64,201 59,204 C54,207 48,221 45,218 C42,214 43,210 43,207 Z" stroke="#111" stroke-width="1.2" fill="none"/>
<path d="M12,240 Q8,241 8.5,245 Q9,248 14,248 L27.5,248" stroke="#111" stroke-width="1.2" fill="none"/>
<path d="M44.5,233 L51.5,233 L55,239.5 L51.5,246 L44.5,246 L41,239.5 Z M56,246.5 L61,238.5 L66,246.5 Z M41.5,249.5 h14 v7 h-14 Z" stroke="#111" stroke-width="1.2" fill="none"/>
<defs><pattern id="hp" patternUnits="userSpaceOnUse" width="2.5" height="2.5" patternTransform="rotate(45)"><line x1="0" y1="0" x2="0" y2="2.5" stroke="#333" stroke-width="0.7"/></pattern></defs>
<path d="M8,287 L8,280 L14,272 L28,272 L28,287 Z" fill="url(#hp)" stroke="#111" stroke-width="1.2"/>
<circle cx="20.5" cy="280" r="3.8" fill="#eee" stroke="#111" stroke-width="1.1"/>
<text x="18.5" y="334" font-family="Liberation Serif" font-size="28" text-anchor="middle" fill="#111">A</text>
<path d="M43.5,331 v-12 M61.5,331 v-12 M43.5,320 h18" stroke="#111" stroke-width="1.2" fill="none"/>
<path d="M43.5,320 l3,-2 v4 z M61.5,320 l-3,-2 v4 z" fill="#111"/>
<rect x="7" y="348.5" width="21.5" height="17" fill="#fff" stroke="#111" stroke-width="1.3"/>
<path d="M8.5,364 L14,357 L17,360 L20.5,355 L27,364 Z" fill="#111"/><circle cx="24" cy="352" r="1.6" fill="#111"/>
<path d="M5.5,412 L5.5,395 L22,412 Z M9,408.5 L9,403 L14.5,408.5 Z" fill="none" stroke="#111" stroke-width="1.1"/>
<path d="M10,392 L18,399 L20,397.5 L12,390.5 Z" fill="#e02020" stroke="#800" stroke-width="0.6"/>
<path d="M26,389 L23,407 M26,389 L29,407 M26,389 v-2" stroke="#111" stroke-width="1" fill="none"/>
<rect x="40.5" y="395.5" width="25" height="6" rx="1" fill="#fff" stroke="#111" stroke-width="1.1"/>
<path d="M43,395.5 v2 M45.5,395.5 v1.5 M48,395.5 v2 M50.5,395.5 v1.5 M53,395.5 v2 M55.5,395.5 v1.5 M58,395.5 v2 M60.5,395.5 v1.5 M63,395.5 v2" stroke="#111" stroke-width="0.7"/>
<rect x="7" y="427" width="17" height="13.5" fill="#fbefc8" stroke="#333" stroke-width="0.9"/>
<circle cx="21.5" cy="438" r="7.3" fill="#fbefc8" stroke="#333" stroke-width="0.9"/>
<circle cx="7.5" cy="440.5" r="1.4" fill="#e02020"/>
<path d="M41,433.5 L58,425" stroke="#e02020" stroke-width="1.2"/>
<path d="M51,428.5 L51,442 L54,439.5 L56.2,444.5 L58,443.7 L56,438.8 L60,438.8 Z" fill="#fff" stroke="#333" stroke-width="0.9" stroke-linejoin="round"/>
<path d="M8,471 L19,466.5 L29,471 L29,482 L18.5,487 L8,482 Z M8,471 L18.5,476 L29,471 M18.5,476 L18.5,487" fill="none" stroke="#111" stroke-width="1.1" stroke-linejoin="round"/>
</svg>
<!-- title bar of mdi window -->
<div class="a" style="left:71px;top:108px;width:1083px;height:24px;background:#d5d5d5"></div>
<svg class="ico" style="left:94px;top:111px" width="16" height="16" viewBox="94 111 16 16">
<circle cx="102" cy="118.7" r="5.8" fill="#f4f4f4" stroke="#24408a" stroke-width="1.8"/>
<path d="M98,116 L106,121 M100,114 L101,123" stroke="#c88" stroke-width="0.5"/>
<path d="M101.5,118.5 L107,124 L108,125" stroke="#e8b020" stroke-width="2.2"/>
</svg>
<div class="a" style="left:560px;top:113.5px;width:145px;text-align:center;font-size:12.2px;line-height:15px;color:#1e1e1e">back_plate.dxf</div>
<!-- right scroll strip -->
<div class="a" style="left:1138px;top:155px;width:16px;height:593px;background:linear-gradient(90deg,#f9f9f9 0 15px,#ececec 15px)"></div>
<div class="a" style="left:1142.5px;top:298px;width:8.5px;height:282px;border-radius:4.5px;background:#828282"></div>
<!-- bottom scroll strip -->
<div class="a" style="left:95px;top:732px;width:1043px;height:16px;background:#f9f9f9"></div>
<div class="a" style="left:71px;top:732px;width:24px;height:16px;background:#ebebeb"></div>
<div class="a" style="left:300.5px;top:737px;width:604px;height:8.5px;border-radius:4.5px;background:#828282"></div>
<div class="a" style="left:1099px;top:732px;width:55px;height:16px;background:#e8e8e8;font-size:13px;line-height:17px;text-align:right;padding-right:1px;color:#111">1 &lt; 10</div>
<div class="a" style="left:71px;top:748px;width:1083px;height:1px;background:#a8a8a8"></div>
<!-- command area -->
<div class="a" style="left:71px;top:749px;width:1083px;height:49px;background:#ececec"></div>
<div class="a" style="left:72px;top:749px;width:1081px;height:22px;background:#fff;border-bottom:1px solid #b0b0b0"></div>
<div class="a" style="left:77px;top:750px;font-size:13px;line-height:17px;color:#1010dc;white-space:nowrap"><i>Commande:</i> new</div>
<div class="a" style="left:72px;top:777px;font-size:13.3px;line-height:16px;color:#111;white-space:nowrap">Commande :</div>
<div class="a" style="left:153px;top:776px;width:973px;height:18px;background:#fff"></div>
<div class="a" style="left:1127px;top:772px;width:26px;height:25.5px;border:1px solid #b0b0b0;background:linear-gradient(#ececec,#f3f3f3)"></div>
<svg class="ico" style="left:1127px;top:772px" width="26" height="25" viewBox="1127 772 26 25">
<rect x="1133.5" y="780.5" width="13.5" height="9" fill="#eee" stroke="#333" stroke-width="1"/>
<rect x="1133" y="780" width="14.5" height="3" fill="#111"/>
</svg>
<!-- status bar -->
<div class="a" style="left:0;top:798px;width:1500px;height:46px;background:#dcdcdc"></div>
<div class="a" style="left:2px;top:807.5px;font-size:9.6px;line-height:12px;color:#111;white-space:nowrap">43.2927,27.1707</div>
<div class="a" style="left:2px;top:827.5px;font-size:9.6px;line-height:12px;color:#111;white-space:nowrap">@43.2927,27.1707</div>
<div class="a" style="left:253px;top:802px;width:1px;height:40px;background:#8a8a8a"></div>
<div class="a" style="left:256px;top:807.5px;font-size:9.6px;line-height:12px;color:#111;white-space:nowrap">51.1127&lt;32.11°</div>
<div class="a" style="left:256px;top:827.5px;font-size:9.6px;line-height:12px;color:#111;white-space:nowrap">@51.1127&lt;32.11°</div>
<div class="a" style="left:506px;top:818.5px;width:6px;height:6px;border-radius:3px;background:#c4c4c4"></div>
<div class="a" style="left:440px;top:811.3px;width:259px;text-align:right;font-size:10.2px;line-height:12px;color:#111;white-space:nowrap">Sélectionne une entité ou une région</div>
<div class="a" style="left:440px;top:822.3px;width:259px;text-align:right;font-size:10.2px;line-height:12px;color:#111;white-space:nowrap">Déplacer l’entité ou la référence</div>
<svg class="ico" style="left:715px;top:804px" width="24" height="34" viewBox="715 804 24 34">
<rect x="717.5" y="806.5" width="17" height="29" rx="8.5" fill="#fff" stroke="#333" stroke-width="1"/>
<line x1="717.5" y1="819" x2="734.5" y2="819" stroke="#333" stroke-width="0.8"/>
<line x1="726" y1="806.5" x2="726" y2="819" stroke="#333" stroke-width="0.8"/>
<rect x="724.5" y="809" width="3" height="6" rx="1.5" fill="#fff" stroke="#333" stroke-width="0.8"/>
</svg>
<div class="a" style="left:940px;top:818.5px;width:6px;height:6px;border-radius:3px;background:#c4c4c4"></div>
<div class="a" style="left:949px;top:811.3px;font-size:10.2px;line-height:12px;color:#111;white-space:nowrap">Entités sélectionnées :</div>
<div class="a" style="left:949px;top:822.3px;font-size:10.2px;line-height:12px;color:#111;white-space:nowrap">1 Cercle sur calque "0".</div>
<div class="a" style="left:1269px;top:818.5px;width:6px;height:6px;border-radius:3px;background:#c4c4c4"></div>
<!-- dock panel -->
<div class="a" style="left:1154px;top:108px;width:1px;height:690px;background:#cfcfcf"></div>
<div class="a" style="left:1155px;top:108px;width:300px;height:22px;background:linear-gradient(#efefef,#e1e1e1)"></div>
<div class="a" style="left:1157px;top:111px;width:14px;height:14px;border-radius:7px;background:#6a6a6a"></div>
<svg class="ico" style="left:1157px;top:111px" width="14" height="14" viewBox="0 0 14 14"><path d="M4.3,4.3 L9.7,9.7 M9.7,4.3 L4.3,9.7" stroke="#fff" stroke-width="1.8" stroke-linecap="round"/></svg>
<div class="a" style="left:1175px;top:111px;width:14px;height:14px;border-radius:7px;background:#6a6a6a"></div>
<svg class="ico" style="left:1175px;top:111px" width="14" height="14" viewBox="0 0 14 14"><rect x="5.5" y="3.5" width="5" height="4" fill="none" stroke="#fff" stroke-width="1.1"/><rect x="3.5" y="6" width="5" height="4.5" fill="#6a6a6a" stroke="#fff" stroke-width="1.1"/></svg>
<div class="a" style="left:1222px;top:112px;width:200px;text-align:center;font-size:11.9px;line-height:15px;color:#222">Liste des calques</div>
<div class="a" style="left:1155px;top:130px;width:60px;height:26px;border:1px solid #bdbdbd;border-bottom:2px solid #b4b4b4;background:linear-gradient(#e4e4e4,#f4f4f4)"></div>
<div class="a" style="left:1215px;top:130px;width:60px;height:26px;border:1px solid #bdbdbd;border-bottom:2px solid #b4b4b4;background:linear-gradient(#e4e4e4,#f4f4f4)"></div>
<div class="a" style="left:1275px;top:130px;width:60px;height:26px;border:1px solid #bdbdbd;border-bottom:2px solid #b4b4b4;background:linear-gradient(#e4e4e4,#f4f4f4)"></div>
<div class="a" style="left:1335px;top:130px;width:60px;height:26px;border:1px solid #bdbdbd;border-bottom:2px solid #b4b4b4;background:linear-gradient(#e4e4e4,#f4f4f4)"></div>
<div class="a" style="left:1395px;top:130px;width:60px;height:26px;border:1px solid #bdbdbd;border-bottom:2px solid #b4b4b4;background:linear-gradient(#e4e4e4,#f4f4f4)"></div>
<svg class="ico" style="left:1155px;top:130px" width="300" height="26" viewBox="1155 130 300 26">
<g transform="translate(1185.0,142.5)"><path d="M-7.5,0 Q-6,-5.5 0,-5.5 Q5.5,-5.5 7.5,0 Q5,5.3 0,5.3 Q-5.5,5.3 -7.5,0 Z" fill="#000"/><path d="M-5,0.6 Q-4,-2.8 0,-2.8 Q4,-2.8 5,0.6 Q3.5,3.6 0,3.6 Q-3.5,3.6 -5,0.6 Z" fill="#fff"/><circle cx="0" cy="-0.2" r="2.9" fill="#000"/></g>
<g transform="translate(1245.0,142.5)"><path d="M-7.5,0 Q-6,-5.5 0,-5.5 Q5.5,-5.5 7.5,0 Q5,5.3 0,5.3 Q-5.5,5.3 -7.5,0 Z" fill="#b4b4b4"/><path d="M-5,0.6 Q-4,-2.8 0,-2.8 Q4,-2.8 5,0.6 Q3.5,3.6 0,3.6 Q-3.5,3.6 -5,0.6 Z" fill="#fff"/><circle cx="0" cy="-0.2" r="2.9" fill="#b4b4b4"/></g>
<path d="M1299.5,143 h11 M1305,137.5 v11" stroke="#e00000" stroke-width="2.6"/>
<path d="M1359.5,143 h11" stroke="#e00000" stroke-width="2.6"/>
<path d="M1419,147.5 L1430,136 L1432,138 L1421,149.5 L1418,150.5 Z" fill="#e8a93a" stroke="#8a6020" stroke-width="0.6"/><path d="M1430,136 L1431.5,134.5 L1433.5,136.5 L1432,138 Z" fill="#e03030"/>
</svg>
<div class="a" style="left:1155px;top:156px;width:300px;height:642px;background:#fff;border-left:1px solid #e4e4e4;border-right:1px solid #d8d8d8"></div>
<div class="a" style="left:1161px;top:162.7px;width:16px;height:9px;background:#000;border:1px solid #222"></div>
<div class="a" style="left:1183px;top:159.2px;font-size:13.3px;line-height:16px;color:#111;white-space:nowrap">0</div>
<div class="a" style="left:1161px;top:182.7px;width:16px;height:9px;background:#f00;border:1px solid #222"></div>
<div class="a" style="left:1183px;top:179.2px;font-size:13.3px;line-height:16px;color:#111;white-space:nowrap">Centre</div>
<div class="a" style="left:1161px;top:202.7px;width:16px;height:9px;background:#a6a6aa;border:1px solid #222"></div>
<div class="a" style="left:1183px;top:199.2px;font-size:13.3px;line-height:16px;color:#111;white-space:nowrap">Retour</div>
<div class="a" style="left:1161px;top:222.7px;width:16px;height:9px;background:#000;border:1px solid #222"></div>
<div class="a" style="left:1183px;top:219.2px;font-size:13.3px;line-height:16px;color:#111;white-space:nowrap">Ventilation</div>
<svg class="ico" style="left:1380px;top:156px" width="75" height="90" viewBox="1380 156 75 90">
<g transform="translate(1423.1,166.5)"><path d="M-7.5,0 Q-6,-5.5 0,-5.5 Q5.5,-5.5 7.5,0 Q5,5.3 0,5.3 Q-5.5,5.3 -7.5,0 Z" fill="#000"/><path d="M-5,0.6 Q-4,-2.8 0,-2.8 Q4,-2.8 5,0.6 Q3.5,3.6 0,3.6 Q-3.5,3.6 -5,0.6 Z" fill="#fff"/><circle cx="0" cy="-0.2" r="2.9" fill="#000"/></g>
<path d="M1441.3,166.7 v-3.5 a3.6,3.6 0 0 1 7.2,0 v3.5" fill="none" stroke="#bbb" stroke-width="1.4"/><rect x="1440" y="166.2" width="9.8" height="7.6" fill="#b8b8b8"/>
<g transform="translate(1423.1,186.5)"><path d="M-7.5,0 Q-6,-5.5 0,-5.5 Q5.5,-5.5 7.5,0 Q5,5.3 0,5.3 Q-5.5,5.3 -7.5,0 Z" fill="#000"/><path d="M-5,0.6 Q-4,-2.8 0,-2.8 Q4,-2.8 5,0.6 Q3.5,3.6 0,3.6 Q-3.5,3.6 -5,0.6 Z" fill="#fff"/><circle cx="0" cy="-0.2" r="2.9" fill="#000"/></g>
<path d="M1441.3,186.7 v-3.5 a3.6,3.6 0 0 1 7.2,0 v3.5" fill="none" stroke="#bbb" stroke-width="1.4"/><rect x="1440" y="186.2" width="9.8" height="7.6" fill="#b8b8b8"/>
<g transform="translate(1423.1,206.5)"><path d="M-7.5,0 Q-6,-5.5 0,-5.5 Q5.5,-5.5 7.5,0 Q5,5.3 0,5.3 Q-5.5,5.3 -7.5,0 Z" fill="#000"/><path d="M-5,0.6 Q-4,-2.8 0,-2.8 Q4,-2.8 5,0.6 Q3.5,3.6 0,3.6 Q-3.5,3.6 -5,0.6 Z" fill="#fff"/><circle cx="0" cy="-0.2" r="2.9" fill="#000"/></g>
<path d="M1441.3,206.7 v-3.5 a3.6,3.6 0 0 1 7.2,0 v3.5" fill="none" stroke="#bbb" stroke-width="1.4"/><rect x="1440" y="206.2" width="9.8" height="7.6" fill="#b8b8b8"/>
<g transform="translate(1423.1,226.5)"><path d="M-7.5,0 Q-6,-5.5 0,-5.5 Q5.5,-5.5 7.5,0 Q5,5.3 0,5.3 Q-5.5,5.3 -7.5,0 Z" fill="#000"/><path d="M-5,0.6 Q-4,-2.8 0,-2.8 Q4,-2.8 5,0.6 Q3.5,3.6 0,3.6 Q-3.5,3.6 -5,0.6 Z" fill="#fff"/><circle cx="0" cy="-0.2" r="2.9" fill="#000"/></g>
<path d="M1441.3,226.7 v-3.5 a3.6,3.6 0 0 1 7.2,0 v3.5" fill="none" stroke="#bbb" stroke-width="1.4"/><rect x="1440" y="226.2" width="9.8" height="7.6" fill="#b8b8b8"/>
<path d="M1395,212.2 L1405,201.2 L1407,203.2 L1397,214.2 L1394,215.2 Z" fill="#e8a93a" stroke="#8a6020" stroke-width="0.6"/><path d="M1405,201.2 L1406.5,199.7 L1408.5,201.7 L1407,203.2 Z" fill="#e03030"/>
</svg>
<!-- right toolbar -->
<div class="a" style="left:1455px;top:108px;width:45px;height:690px;background:linear-gradient(90deg,#d4d4d4,#e9e9e9 15%,#e4e4e4 60%,#c8c8c8)"></div>
<div class="a" style="left:1462px;top:116px;width:26px;height:2px;background:linear-gradient(90deg,#a4a4a4 0 2px,transparent 2px 6px) 0 0/6px 2px repeat-x"></div>
<div class="sel" style="left:1457px;top:120.7px;width:43px;height:42px;border-radius:6px"></div>
<div class="sel" style="left:1457px;top:417px;width:43px;height:42.7px;border-radius:6px"></div>
<div class="a" style="left:1458px;top:261px;width:42px;height:1px;border-top:1px dotted #666"></div>
<div class="a" style="left:1458px;top:409px;width:42px;height:1px;border-top:1px dotted #666"></div>
<svg class="ico" style="left:1455px;top:108px" width="45" height="400" viewBox="1455 108 45 400">
<rect x="1463.5" y="127.5" width="27" height="27" fill="#fff" stroke="#111" stroke-width="1"/>
<rect x="1463.5" y="127.5" width="27" height="4" fill="#111"/><rect x="1464.8" y="128.0" width="3.4" height="3.4" fill="#fff" stroke="#000" stroke-width="0.5"/>
<path d="M1469,140.5 l8,-3 v10 l-8,3 z" fill="#888" stroke="#444" stroke-width="0.6"/><path d="M1474,138.5 l9,-3 v11 l-9,3 z" fill="#f4f4f4" stroke="#777" stroke-width="0.6"/><path d="M1477,146.5 l3,-6 l1.5,6 z" fill="none" stroke="#e02020" stroke-width="0.8"/>
<rect x="1463.5" y="174.2" width="27" height="27" fill="#fff" stroke="#111" stroke-width="1"/>
<rect x="1463.5" y="174.2" width="27" height="4" fill="#111"/><rect x="1464.8" y="174.7" width="3.4" height="3.4" fill="#fff" stroke="#000" stroke-width="0.5"/>
<rect x="1468.5" y="185.2" width="10" height="8" fill="#fbefc8" stroke="#555" stroke-width="0.6"/><circle cx="1480" cy="192.2" r="5" fill="#fbefc8" stroke="#555" stroke-width="0.6"/>
<rect x="1463.5" y="220.3" width="27" height="27" fill="#fff" stroke="#111" stroke-width="1"/>
<rect x="1463.5" y="220.3" width="27" height="4" fill="#111"/><rect x="1464.8" y="220.8" width="3.4" height="3.4" fill="#fff" stroke="#000" stroke-width="0.5"/>
<rect x="1467.5" y="231.3" width="19" height="12" rx="2" fill="#f4f6fa" stroke="#b8c8e0" stroke-width="0.8"/>
<rect x="1463.5" y="276.4" width="27" height="27" fill="#fff" stroke="#111" stroke-width="1"/>
<rect x="1463.5" y="276.4" width="27" height="4" fill="#111"/><rect x="1464.8" y="276.9" width="3.4" height="3.4" fill="#fff" stroke="#000" stroke-width="0.5"/>
<rect x="1466" y="285.9" width="4" height="3.2" fill="#111"/><rect x="1473" y="285.9" width="14.5" height="3.2" fill="#fff" stroke="#333" stroke-width="0.7"/>
<rect x="1466" y="291.9" width="4" height="3.2" fill="#111"/><rect x="1473" y="291.9" width="14.5" height="3.2" fill="#fff" stroke="#333" stroke-width="0.7"/>
<rect x="1466" y="297.9" width="4" height="3.2" fill="#111"/><rect x="1473" y="297.9" width="14.5" height="3.2" fill="#fff" stroke="#333" stroke-width="0.7"/>
<rect x="1463.5" y="322.1" width="27" height="27" fill="#fff" stroke="#111" stroke-width="1"/>
<rect x="1463.5" y="322.1" width="27" height="4" fill="#111"/><rect x="1464.8" y="322.6" width="3.4" height="3.4" fill="#fff" stroke="#000" stroke-width="0.5"/>
<ellipse cx="1477" cy="332.6" rx="7" ry="1.6" fill="#777"/><path d="M1470,332.6 h14 l-5.5,6 v6.5 l-3,-2 v-4.5 z" fill="#a8a8a8" stroke="#555" stroke-width="0.6"/>
<rect x="1463.5" y="368.2" width="27" height="27" fill="#fff" stroke="#111" stroke-width="1"/>
<rect x="1463.5" y="368.2" width="27" height="4" fill="#111"/><rect x="1464.8" y="368.7" width="3.4" height="3.4" fill="#fff" stroke="#000" stroke-width="0.5"/>
<path d="M1468,378.2 l6,3 v6 l-6,3 z" fill="#fff" stroke="#333" stroke-width="0.8"/><rect x="1474" y="380.7" width="11" height="7" fill="#999" stroke="#333" stroke-width="0.6"/>
<rect x="1463.5" y="424.2" width="27" height="27" fill="#fff" stroke="#111" stroke-width="1"/>
<rect x="1463.5" y="424.2" width="27" height="4" fill="#111"/><rect x="1464.8" y="424.7" width="3.4" height="3.4" fill="#fff" stroke="#000" stroke-width="0.5"/>
<path d="M1466,434.2 h12 M1466,437.2 h9 M1466,440.2 h11 M1466,443.2 h11" stroke="#888" stroke-width="0.9"/><line x1="1463.5" y1="446.7" x2="1490.5" y2="446.7" stroke="#111" stroke-width="0.8"/><path d="M1466,449.2 h2 M1473,449.2 h14" stroke="#333" stroke-width="0.9"/>
<rect x="1463.5" y="471.1" width="27" height="27" fill="#fff" stroke="#111" stroke-width="1"/>
<rect x="1463.5" y="471.1" width="27" height="4" fill="#111"/><rect x="1464.8" y="471.6" width="3.4" height="3.4" fill="#fff" stroke="#000" stroke-width="0.5"/>
<rect x="1469" y="479.6" width="16" height="16" rx="1" fill="#c7872f"/><rect x="1471" y="482.1" width="12" height="13" fill="#f6f6f6"/><path d="M1473,485.1 h8 M1473,488.1 h8 M1473,491.1 h8" stroke="#bbb" stroke-width="0.8"/><rect x="1473" y="478.1" width="8" height="3" fill="#999"/>
</svg>
</body></html>
